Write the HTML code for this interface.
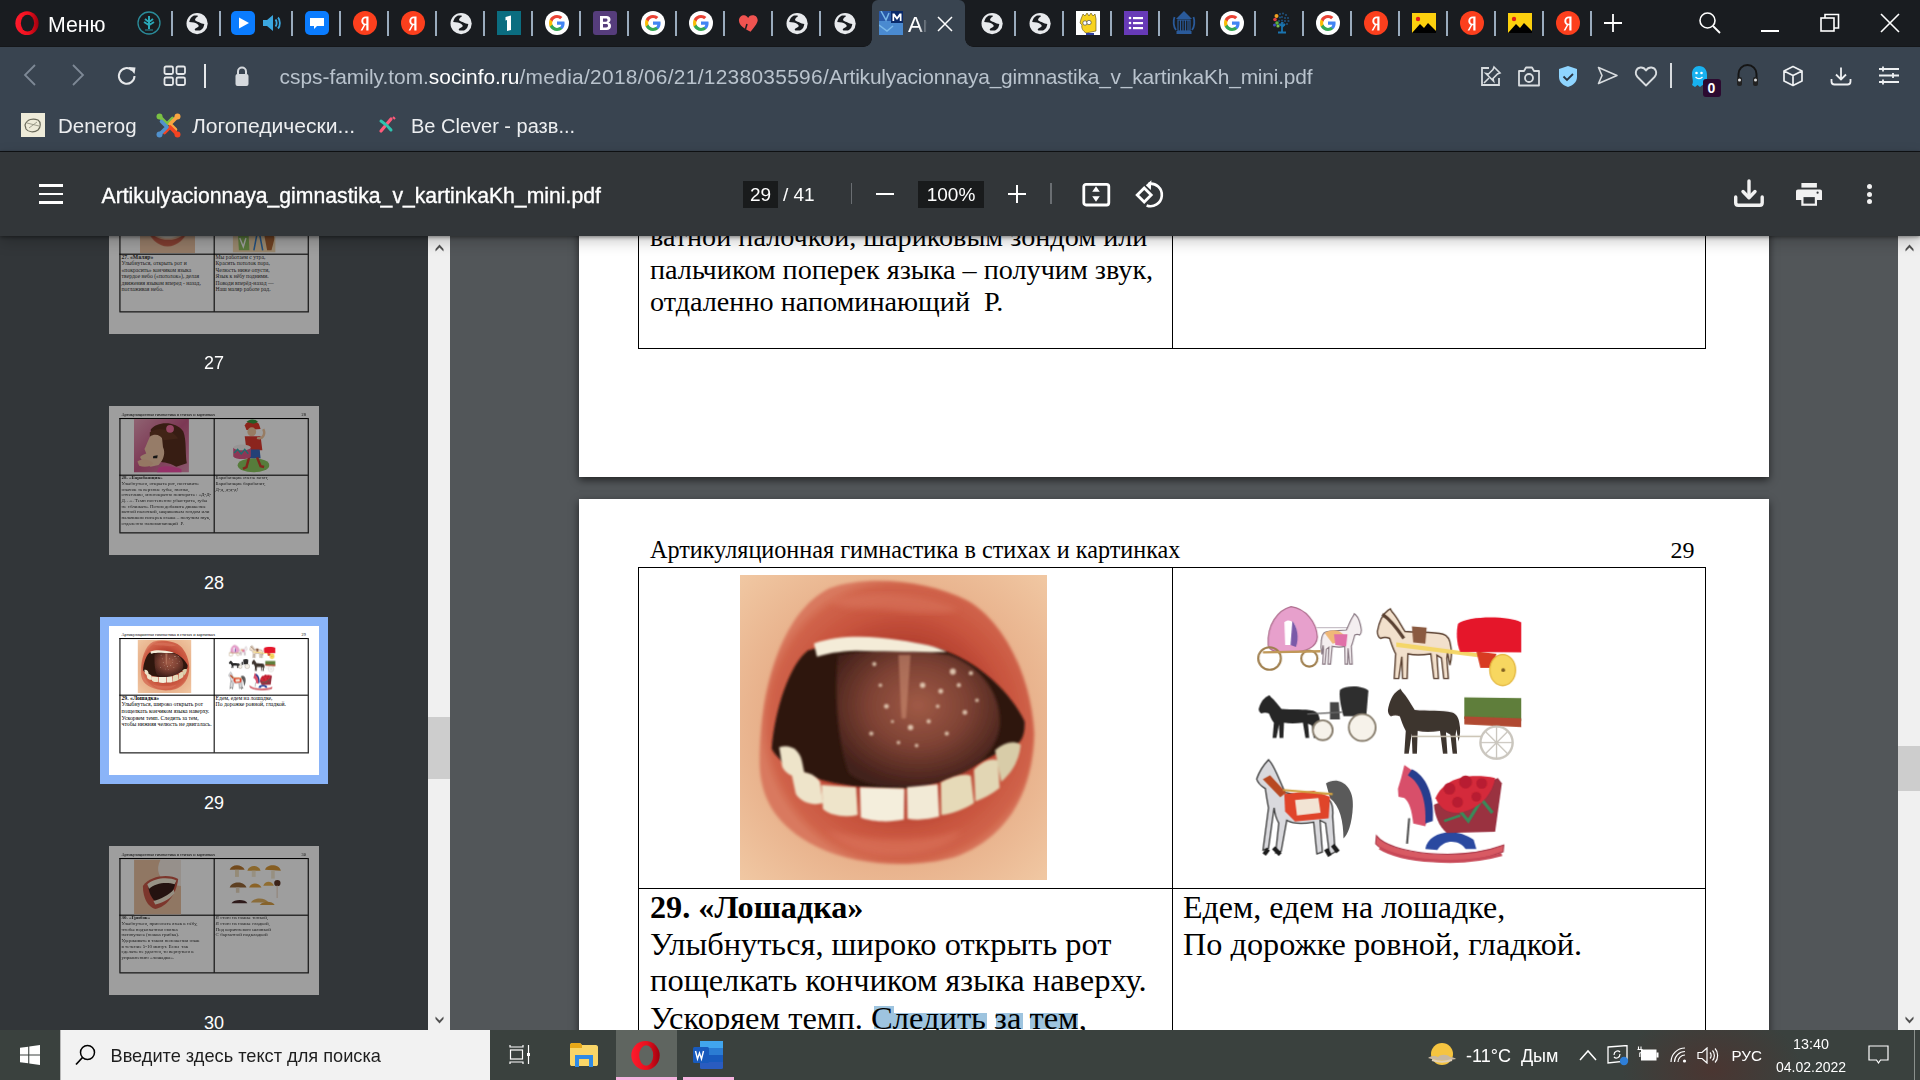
<!DOCTYPE html>
<html><head><meta charset="utf-8">
<style>
*{margin:0;padding:0;box-sizing:border-box}
html,body{width:1920px;height:1080px;overflow:hidden;background:#525659;font-family:"Liberation Sans",sans-serif}
.a{position:absolute}
.ui{position:absolute;font-family:"Liberation Sans",sans-serif;white-space:pre}
#tabs{left:0;top:0;width:1920px;height:47px;background:#191c20;border-bottom:1px solid #15171a}
#addr{left:0;top:47px;width:1920px;height:104px;background:#394450}
#line{left:0;top:151px;width:1920px;height:1px;background:#111316}
#tb{left:0;top:152px;width:1920px;height:84px;background:#323639;box-shadow:0 1px 4px rgba(0,0,0,.45),0 5px 14px rgba(0,0,0,.22);z-index:5}
#side{left:0;top:236px;width:428px;height:794px;background:#323639;overflow:hidden}
#sscroll{left:428px;top:236px;width:22px;height:794px;background:#f0f0f0}
#main{left:450px;top:236px;width:1448px;height:794px;background:#525659;overflow:hidden}
#mscroll{left:1898px;top:236px;width:22px;height:794px;background:#f0f0f0}
#task{left:0;top:1030px;width:1920px;height:50px;background:radial-gradient(ellipse 90px 60px at 1712px 40px,rgba(80,50,45,.75),rgba(80,50,45,0)),#3a413e;z-index:6}
.page{position:absolute;background:#fff;box-shadow:0 3px 8px rgba(0,0,0,.6)}
.s{position:absolute;font-family:"Liberation Serif",serif;color:#000;white-space:pre;line-height:1.107}
.hl{position:absolute;background:#9ec4df}
.ln{position:absolute;background:#000}
</style></head><body>
<div id="tabs" class="a"></div>
<div id="addr" class="a"></div>
<div id="line" class="a"></div>
<div class="a" style="left:0;top:0;width:1920px;height:151px;z-index:7">
<svg class="a" style="left:15.0px;top:11.0px" width="24" height="24" viewBox="0 0 24 24"><defs><linearGradient id="og" x1="0" x2="1" y1="0" y2="0"><stop offset="0" stop-color="#ff1b2d"/><stop offset=".55" stop-color="#f0101e"/><stop offset="1" stop-color="#a0000f"/></linearGradient></defs><ellipse cx="12" cy="12.2" rx="11.6" ry="12" fill="url(#og)"/><ellipse cx="12.5" cy="12.2" rx="6.6" ry="8.4" fill="#191c20"/></svg>
<div class="a ui" style="left:48px;top:12.5px;font-size:21.3px;color:#fff;line-height:24px">Меню</div>
<svg class="a" style="left:137.0px;top:11.0px" width="24" height="24" viewBox="0 0 24 24"><circle cx="12" cy="12" r="11" fill="none" stroke="#2a8c9a" stroke-width="1.3"/><path d="M12 5 L12 18 M8 8 L12 11 L16 8 M7 11 L12 14 L17 11" stroke="#2aa8b8" stroke-width="2"/><path d="M8 19 H16" stroke="#2a8c9a"/></svg>
<div class="a" style="left:171px;top:11px;width:2px;height:25px;background:#9aabbd"></div>
<svg class="a" style="left:185.0px;top:11.0px" width="24" height="24" viewBox="0 0 24 24"><circle cx="12.1" cy="12.6" r="10.6" fill="#e8eaed"/><path d="M13 4.7 C11 4.5 9 4.5 8.4 4.7 C7 5.5 5.8 6.8 5.3 7.9 C4.8 9 4.3 10 4.2 11 C6 11.2 7.5 11.2 8.9 11.5 C10 11.8 11 12 11.5 12.5 C12.5 13.2 13.4 13.9 13.6 14.6 C13.8 15.3 13.5 15.8 13 16.1 C12 16.8 10.5 17.5 9.7 18.2 C9.8 18.9 10 19.3 10.4 19.5 C12 19.6 13.5 19.6 14.9 19.5 C16.3 18.8 17.5 17.8 18.2 16.7 C18.8 15.5 19.2 14.2 19.3 13 C18.4 12.8 17.5 12.6 16.7 12.5 C15.5 12 14.5 11.5 13.6 11 C12.3 10.5 11 10 10.4 9.4 C10 8.8 10 8.3 10.2 7.9 C10.8 7 11.8 6.2 12.5 5.8 Z" fill="#191c20"/></svg>
<div class="a" style="left:219px;top:11px;width:2px;height:25px;background:#9aabbd"></div>
<svg class="a" style="left:231.0px;top:11.0px" width="24" height="24" viewBox="0 0 24 24"><rect width="24" height="24" rx="5" fill="#1a73e8" style="fill:#0a7cff"/><path d="M8 6.5 L18 12 L8 17.5 Z" fill="#fff"/></svg>
<svg class="a" style="left:260.0px;top:11.0px" width="24" height="24" viewBox="0 0 24 24"><path d="M3 9 H7 L13 4 V20 L7 15 H3 Z" fill="#3ba7e0"/><path d="M15.5 8.5 C17 10 17 14 15.5 15.5 M18 6.5 C20.5 9 20.5 15 18 17.5" stroke="#3ba7e0" stroke-width="1.8" fill="none"/></svg>
<div class="a" style="left:291px;top:11px;width:2px;height:25px;background:#9aabbd"></div>
<svg class="a" style="left:305.0px;top:11.0px" width="24" height="24" viewBox="0 0 24 24"><rect width="24" height="24" rx="5" fill="#0a7cff"/><path d="M5 7 H19 V15 H12 L9 18 V15 H5 Z" fill="#fff"/></svg>
<div class="a" style="left:339px;top:11px;width:2px;height:25px;background:#9aabbd"></div>
<svg class="a" style="left:353.0px;top:11.0px" width="24" height="24" viewBox="0 0 24 24"><circle cx="12" cy="12" r="12" fill="#fc3f1d"/><path d="M13.3 19.5 V14.3 H12.2 L9.4 19.5 H7.6 L10.7 13.9 C9.1 13.2 8.3 11.9 8.3 10.1 C8.3 7.3 10.1 5.5 13 5.5 H15.5 V19.5 Z M13.3 7.2 H12.6 C11.1 7.2 10.3 8.2 10.3 10 C10.3 11.8 11.1 12.7 12.6 12.7 H13.3 Z" fill="#fff"/></svg>
<div class="a" style="left:387px;top:11px;width:2px;height:25px;background:#9aabbd"></div>
<svg class="a" style="left:401.0px;top:11.0px" width="24" height="24" viewBox="0 0 24 24"><circle cx="12" cy="12" r="12" fill="#fc3f1d"/><path d="M13.3 19.5 V14.3 H12.2 L9.4 19.5 H7.6 L10.7 13.9 C9.1 13.2 8.3 11.9 8.3 10.1 C8.3 7.3 10.1 5.5 13 5.5 H15.5 V19.5 Z M13.3 7.2 H12.6 C11.1 7.2 10.3 8.2 10.3 10 C10.3 11.8 11.1 12.7 12.6 12.7 H13.3 Z" fill="#fff"/></svg>
<div class="a" style="left:435px;top:11px;width:2px;height:25px;background:#9aabbd"></div>
<svg class="a" style="left:449.0px;top:11.0px" width="24" height="24" viewBox="0 0 24 24"><circle cx="12.1" cy="12.6" r="10.6" fill="#e8eaed"/><path d="M13 4.7 C11 4.5 9 4.5 8.4 4.7 C7 5.5 5.8 6.8 5.3 7.9 C4.8 9 4.3 10 4.2 11 C6 11.2 7.5 11.2 8.9 11.5 C10 11.8 11 12 11.5 12.5 C12.5 13.2 13.4 13.9 13.6 14.6 C13.8 15.3 13.5 15.8 13 16.1 C12 16.8 10.5 17.5 9.7 18.2 C9.8 18.9 10 19.3 10.4 19.5 C12 19.6 13.5 19.6 14.9 19.5 C16.3 18.8 17.5 17.8 18.2 16.7 C18.8 15.5 19.2 14.2 19.3 13 C18.4 12.8 17.5 12.6 16.7 12.5 C15.5 12 14.5 11.5 13.6 11 C12.3 10.5 11 10 10.4 9.4 C10 8.8 10 8.3 10.2 7.9 C10.8 7 11.8 6.2 12.5 5.8 Z" fill="#191c20"/></svg>
<div class="a" style="left:483px;top:11px;width:2px;height:25px;background:#9aabbd"></div>
<svg class="a" style="left:497.0px;top:11.0px" width="24" height="24" viewBox="0 0 24 24"><rect width="24" height="24" fill="#0b6d80"/><path d="M8.5 6 L14 4.5 V19 L10 20 V9 L8.5 9.5 Z" fill="#fff"/></svg>
<div class="a" style="left:531px;top:11px;width:2px;height:25px;background:#9aabbd"></div>
<svg class="a" style="left:545.0px;top:11.0px" width="24" height="24" viewBox="0 0 24 24"><circle cx="12" cy="12" r="12" fill="#fff"/><path d="M19.6 12.2 c0-.6-.1-1.1-.2-1.6 H12 v3.1 h4.3 c-.2 1-.8 1.9-1.6 2.4 v2 h2.6 c1.5-1.4 2.3-3.4 2.3-5.9z" fill="#4285f4"/><path d="M12 20 c2.2 0 4-.7 5.3-1.9 l-2.6-2 c-.7.5-1.6.8-2.7.8 -2.1 0-3.9-1.4-4.5-3.3 H4.8 v2.1 C6.1 18.2 8.8 20 12 20z" fill="#34a853"/><path d="M7.5 13.6 c-.2-.5-.3-1-.3-1.6 s.1-1.1.3-1.6 V8.3 H4.8 C4.3 9.4 4 10.7 4 12 s.3 2.6.8 3.7z" fill="#fbbc05"/><path d="M12 7.1 c1.2 0 2.3.4 3.1 1.2 l2.3-2.3 C16 4.7 14.2 4 12 4 8.8 4 6.1 5.8 4.8 8.3 l2.7 2.1 c.6-1.9 2.4-3.3 4.5-3.3z" fill="#ea4335"/></svg>
<div class="a" style="left:579px;top:11px;width:2px;height:25px;background:#9aabbd"></div>
<svg class="a" style="left:593.0px;top:11.0px" width="24" height="24" viewBox="0 0 24 24"><rect width="24" height="24" rx="3" fill="#563d7c"/><path d="M7 5 H13.5 C16 5 17.5 6.3 17.5 8.5 C17.5 10 16.7 11 15.5 11.5 C17.2 12 18 13.3 18 15 C18 17.5 16.3 19 13.5 19 H7 Z M10 7.5 V10.7 H13 C14 10.7 14.5 10.1 14.5 9.1 C14.5 8.1 14 7.5 13 7.5 Z M10 13 V16.5 H13.3 C14.4 16.5 15 15.9 15 14.8 C15 13.6 14.4 13 13.3 13 Z" fill="#fff"/></svg>
<div class="a" style="left:627px;top:11px;width:2px;height:25px;background:#9aabbd"></div>
<svg class="a" style="left:641.0px;top:11.0px" width="24" height="24" viewBox="0 0 24 24"><circle cx="12" cy="12" r="12" fill="#fff"/><path d="M19.6 12.2 c0-.6-.1-1.1-.2-1.6 H12 v3.1 h4.3 c-.2 1-.8 1.9-1.6 2.4 v2 h2.6 c1.5-1.4 2.3-3.4 2.3-5.9z" fill="#4285f4"/><path d="M12 20 c2.2 0 4-.7 5.3-1.9 l-2.6-2 c-.7.5-1.6.8-2.7.8 -2.1 0-3.9-1.4-4.5-3.3 H4.8 v2.1 C6.1 18.2 8.8 20 12 20z" fill="#34a853"/><path d="M7.5 13.6 c-.2-.5-.3-1-.3-1.6 s.1-1.1.3-1.6 V8.3 H4.8 C4.3 9.4 4 10.7 4 12 s.3 2.6.8 3.7z" fill="#fbbc05"/><path d="M12 7.1 c1.2 0 2.3.4 3.1 1.2 l2.3-2.3 C16 4.7 14.2 4 12 4 8.8 4 6.1 5.8 4.8 8.3 l2.7 2.1 c.6-1.9 2.4-3.3 4.5-3.3z" fill="#ea4335"/></svg>
<div class="a" style="left:675px;top:11px;width:2px;height:25px;background:#9aabbd"></div>
<svg class="a" style="left:689.0px;top:11.0px" width="24" height="24" viewBox="0 0 24 24"><circle cx="12" cy="12" r="12" fill="#fff"/><path d="M19.6 12.2 c0-.6-.1-1.1-.2-1.6 H12 v3.1 h4.3 c-.2 1-.8 1.9-1.6 2.4 v2 h2.6 c1.5-1.4 2.3-3.4 2.3-5.9z" fill="#4285f4"/><path d="M12 20 c2.2 0 4-.7 5.3-1.9 l-2.6-2 c-.7.5-1.6.8-2.7.8 -2.1 0-3.9-1.4-4.5-3.3 H4.8 v2.1 C6.1 18.2 8.8 20 12 20z" fill="#34a853"/><path d="M7.5 13.6 c-.2-.5-.3-1-.3-1.6 s.1-1.1.3-1.6 V8.3 H4.8 C4.3 9.4 4 10.7 4 12 s.3 2.6.8 3.7z" fill="#fbbc05"/><path d="M12 7.1 c1.2 0 2.3.4 3.1 1.2 l2.3-2.3 C16 4.7 14.2 4 12 4 8.8 4 6.1 5.8 4.8 8.3 l2.7 2.1 c.6-1.9 2.4-3.3 4.5-3.3z" fill="#ea4335"/></svg>
<div class="a" style="left:723px;top:11px;width:2px;height:25px;background:#9aabbd"></div>
<svg class="a" style="left:737.0px;top:11.0px" width="24" height="24" viewBox="0 0 24 24"><path d="M12 21 C6 16 2 13 2.5 8 C3 4.5 6 3 8.5 3.5 C10.5 4 11.5 5.5 12 7 C13 5.5 14.5 4.5 17 5 C20 5.5 21.5 8 21 11 C20 14 16 17.5 12 21 Z" fill="#f05350" transform="rotate(-10 12 12)"/><path d="M10 13 L8.5 18" stroke="#1b1e22" stroke-width="1.5"/></svg>
<div class="a" style="left:771px;top:11px;width:2px;height:25px;background:#9aabbd"></div>
<svg class="a" style="left:785.0px;top:11.0px" width="24" height="24" viewBox="0 0 24 24"><circle cx="12.1" cy="12.6" r="10.6" fill="#e8eaed"/><path d="M13 4.7 C11 4.5 9 4.5 8.4 4.7 C7 5.5 5.8 6.8 5.3 7.9 C4.8 9 4.3 10 4.2 11 C6 11.2 7.5 11.2 8.9 11.5 C10 11.8 11 12 11.5 12.5 C12.5 13.2 13.4 13.9 13.6 14.6 C13.8 15.3 13.5 15.8 13 16.1 C12 16.8 10.5 17.5 9.7 18.2 C9.8 18.9 10 19.3 10.4 19.5 C12 19.6 13.5 19.6 14.9 19.5 C16.3 18.8 17.5 17.8 18.2 16.7 C18.8 15.5 19.2 14.2 19.3 13 C18.4 12.8 17.5 12.6 16.7 12.5 C15.5 12 14.5 11.5 13.6 11 C12.3 10.5 11 10 10.4 9.4 C10 8.8 10 8.3 10.2 7.9 C10.8 7 11.8 6.2 12.5 5.8 Z" fill="#191c20"/></svg>
<div class="a" style="left:819px;top:11px;width:2px;height:25px;background:#9aabbd"></div>
<svg class="a" style="left:833.0px;top:11.0px" width="24" height="24" viewBox="0 0 24 24"><circle cx="12.1" cy="12.6" r="10.6" fill="#e8eaed"/><path d="M13 4.7 C11 4.5 9 4.5 8.4 4.7 C7 5.5 5.8 6.8 5.3 7.9 C4.8 9 4.3 10 4.2 11 C6 11.2 7.5 11.2 8.9 11.5 C10 11.8 11 12 11.5 12.5 C12.5 13.2 13.4 13.9 13.6 14.6 C13.8 15.3 13.5 15.8 13 16.1 C12 16.8 10.5 17.5 9.7 18.2 C9.8 18.9 10 19.3 10.4 19.5 C12 19.6 13.5 19.6 14.9 19.5 C16.3 18.8 17.5 17.8 18.2 16.7 C18.8 15.5 19.2 14.2 19.3 13 C18.4 12.8 17.5 12.6 16.7 12.5 C15.5 12 14.5 11.5 13.6 11 C12.3 10.5 11 10 10.4 9.4 C10 8.8 10 8.3 10.2 7.9 C10.8 7 11.8 6.2 12.5 5.8 Z" fill="#191c20"/></svg>
<div class="a" style="left:872px;top:0;width:93px;height:47px;background:#394450;border-radius:6px 6px 0 0"></div>
<div class="a" style="left:864px;top:39px;width:8px;height:8px;background:radial-gradient(circle at 0 0,#191c20 7.5px,#394450 8px)"></div>
<div class="a" style="left:965px;top:39px;width:8px;height:8px;background:radial-gradient(circle at 100% 0,#191c20 7.5px,#394450 8px)"></div>
<svg class="a" style="left:879px;top:11px" width="24" height="24" viewBox="0 0 24 24"><rect width="24" height="24" fill="#2a5aa8"/><rect x="0" y="10" width="24" height="14" fill="#4a8ad0"/><rect x="12" y="0" width="12" height="12" fill="#0a2a6a"/><path d="M13.5 10 V2.5 H15.5 L18 6 L20.5 2.5 H22.5 V10 H20.8 V5.5 L18 9 L15.2 5.5 V10 Z" fill="#fff"/><path d="M2 0 L7 9 L10 2 M0 14 L8 20 L14 15" stroke="#7ab8e8" stroke-width="1.5" fill="none"/></svg>
<div class="a ui" style="left:908px;top:13px;width:19px;overflow:hidden;font-size:22px;color:#fff;line-height:24px;-webkit-mask-image:linear-gradient(90deg,#000 60%,transparent)">Ar</div>
<svg class="a" style="left:937px;top:16px" width="16" height="16" viewBox="0 0 16 16"><path d="M1 1 L15 15 M15 1 L1 15" stroke="#fff" stroke-width="1.5"/></svg>
<svg class="a" style="left:980.0px;top:11.0px" width="24" height="24" viewBox="0 0 24 24"><circle cx="12.1" cy="12.6" r="10.6" fill="#e8eaed"/><path d="M13 4.7 C11 4.5 9 4.5 8.4 4.7 C7 5.5 5.8 6.8 5.3 7.9 C4.8 9 4.3 10 4.2 11 C6 11.2 7.5 11.2 8.9 11.5 C10 11.8 11 12 11.5 12.5 C12.5 13.2 13.4 13.9 13.6 14.6 C13.8 15.3 13.5 15.8 13 16.1 C12 16.8 10.5 17.5 9.7 18.2 C9.8 18.9 10 19.3 10.4 19.5 C12 19.6 13.5 19.6 14.9 19.5 C16.3 18.8 17.5 17.8 18.2 16.7 C18.8 15.5 19.2 14.2 19.3 13 C18.4 12.8 17.5 12.6 16.7 12.5 C15.5 12 14.5 11.5 13.6 11 C12.3 10.5 11 10 10.4 9.4 C10 8.8 10 8.3 10.2 7.9 C10.8 7 11.8 6.2 12.5 5.8 Z" fill="#191c20"/></svg>
<div class="a" style="left:1014px;top:11px;width:2px;height:25px;background:#9aabbd"></div>
<svg class="a" style="left:1028.0px;top:11.0px" width="24" height="24" viewBox="0 0 24 24"><circle cx="12.1" cy="12.6" r="10.6" fill="#e8eaed"/><path d="M13 4.7 C11 4.5 9 4.5 8.4 4.7 C7 5.5 5.8 6.8 5.3 7.9 C4.8 9 4.3 10 4.2 11 C6 11.2 7.5 11.2 8.9 11.5 C10 11.8 11 12 11.5 12.5 C12.5 13.2 13.4 13.9 13.6 14.6 C13.8 15.3 13.5 15.8 13 16.1 C12 16.8 10.5 17.5 9.7 18.2 C9.8 18.9 10 19.3 10.4 19.5 C12 19.6 13.5 19.6 14.9 19.5 C16.3 18.8 17.5 17.8 18.2 16.7 C18.8 15.5 19.2 14.2 19.3 13 C18.4 12.8 17.5 12.6 16.7 12.5 C15.5 12 14.5 11.5 13.6 11 C12.3 10.5 11 10 10.4 9.4 C10 8.8 10 8.3 10.2 7.9 C10.8 7 11.8 6.2 12.5 5.8 Z" fill="#191c20"/></svg>
<div class="a" style="left:1062px;top:11px;width:2px;height:25px;background:#9aabbd"></div>
<svg class="a" style="left:1076.0px;top:11.0px" width="24" height="24" viewBox="0 0 24 24"><rect width="24" height="24" fill="#fff"/><path d="M5 8 L7 3 L9 5 L11 2 L13 5 L15 2 L17 5 L19 3 L20 8 V20 L10 22 C7 20 5 17 6 14 L4 12 Z" fill="#f8d320" stroke="#5a4a10" stroke-width=".6"/><circle cx="9" cy="12" r="2.2" fill="#fff" stroke="#333" stroke-width=".6"/><circle cx="13" cy="11.5" r="2.2" fill="#fff" stroke="#333" stroke-width=".6"/><path d="M10 22 L18 22 L18 24 L10 24Z" fill="#3040a0"/></svg>
<div class="a" style="left:1110px;top:11px;width:2px;height:25px;background:#9aabbd"></div>
<svg class="a" style="left:1124.0px;top:11.0px" width="24" height="24" viewBox="0 0 24 24"><rect width="24" height="24" fill="#673ab7"/><circle cx="6" cy="7" r="1.3" fill="#fff"/><circle cx="6" cy="12" r="1.3" fill="#fff"/><circle cx="6" cy="17" r="1.3" fill="#fff"/><rect x="9" y="6" width="10" height="2.2" fill="#fff"/><rect x="9" y="11" width="10" height="2.2" fill="#fff"/><rect x="9" y="16" width="10" height="2.2" fill="#fff"/></svg>
<div class="a" style="left:1158px;top:11px;width:2px;height:25px;background:#9aabbd"></div>
<svg class="a" style="left:1172.0px;top:11.0px" width="24" height="24" viewBox="0 0 24 24"><path d="M12 0 L20 8 H4 Z" fill="#2a5a9a"/><rect x="6" y="9" width="12" height="11" fill="none" stroke="#2a5a9a" stroke-width="1.2"/><path d="M8.5 9 V20 M11 9 V20 M13.5 9 V20 M16 9 V20" stroke="#2a5a9a" stroke-width="1.2"/><rect x="4.5" y="20" width="15" height="3" fill="#2a5a9a"/><path d="M2.5 6 C1 10 1.5 16 4 19 M21.5 6 C23 10 22.5 16 20 19" stroke="#2a5a9a" stroke-width="1.8" fill="none"/></svg>
<div class="a" style="left:1206px;top:11px;width:2px;height:25px;background:#9aabbd"></div>
<svg class="a" style="left:1220.0px;top:11.0px" width="24" height="24" viewBox="0 0 24 24"><circle cx="12" cy="12" r="12" fill="#fff"/><path d="M19.6 12.2 c0-.6-.1-1.1-.2-1.6 H12 v3.1 h4.3 c-.2 1-.8 1.9-1.6 2.4 v2 h2.6 c1.5-1.4 2.3-3.4 2.3-5.9z" fill="#4285f4"/><path d="M12 20 c2.2 0 4-.7 5.3-1.9 l-2.6-2 c-.7.5-1.6.8-2.7.8 -2.1 0-3.9-1.4-4.5-3.3 H4.8 v2.1 C6.1 18.2 8.8 20 12 20z" fill="#34a853"/><path d="M7.5 13.6 c-.2-.5-.3-1-.3-1.6 s.1-1.1.3-1.6 V8.3 H4.8 C4.3 9.4 4 10.7 4 12 s.3 2.6.8 3.7z" fill="#fbbc05"/><path d="M12 7.1 c1.2 0 2.3.4 3.1 1.2 l2.3-2.3 C16 4.7 14.2 4 12 4 8.8 4 6.1 5.8 4.8 8.3 l2.7 2.1 c.6-1.9 2.4-3.3 4.5-3.3z" fill="#ea4335"/></svg>
<div class="a" style="left:1254px;top:11px;width:2px;height:25px;background:#9aabbd"></div>
<svg class="a" style="left:1268.0px;top:11.0px" width="24" height="24" viewBox="0 0 24 24"><circle cx="12" cy="3" r="1.1" fill="#1f4e78"/><circle cx="15" cy="2.5" r="1.1" fill="#1f4e78"/><circle cx="18" cy="4" r="1.1" fill="#1f4e78"/><circle cx="20" cy="7" r="1.1" fill="#1f4e78"/><circle cx="20.5" cy="10" r="1.1" fill="#1f4e78"/><circle cx="19" cy="13" r="1.1" fill="#1f4e78"/><circle cx="16" cy="14" r="1.1" fill="#1f4e78"/><circle cx="13" cy="13" r="1.1" fill="#1f4e78"/><circle cx="11" cy="10" r="1.1" fill="#1f4e78"/><circle cx="14" cy="6" r="1.1" fill="#1f4e78"/><circle cx="17" cy="7" r="1.1" fill="#1f4e78"/><circle cx="17" cy="10" r="1.1" fill="#1f4e78"/><circle cx="14" cy="9.5" r="1.1" fill="#1f4e78"/><circle cx="12" cy="6.5" r="1.1" fill="#1f4e78"/><circle cx="15" cy="12" r="1.1" fill="#1f4e78"/><path d="M14 11 V21 M10 21.5 H18 M14 15 L11 13 M14 16 L17 13" stroke="#1a74b0" stroke-width="1.8" fill="none"/><circle cx="8.5" cy="5" r="2" fill="#f0a020"/><circle cx="7" cy="8.5" r="1.8" fill="#e04040"/><circle cx="9" cy="12" r="1.8" fill="#5ab040"/><circle cx="6.5" cy="14" r="1.5" fill="#4050c0"/><circle cx="10" cy="15" r="1.6" fill="#7ac050"/></svg>
<div class="a" style="left:1302px;top:11px;width:2px;height:25px;background:#9aabbd"></div>
<svg class="a" style="left:1316.0px;top:11.0px" width="24" height="24" viewBox="0 0 24 24"><circle cx="12" cy="12" r="12" fill="#fff"/><path d="M19.6 12.2 c0-.6-.1-1.1-.2-1.6 H12 v3.1 h4.3 c-.2 1-.8 1.9-1.6 2.4 v2 h2.6 c1.5-1.4 2.3-3.4 2.3-5.9z" fill="#4285f4"/><path d="M12 20 c2.2 0 4-.7 5.3-1.9 l-2.6-2 c-.7.5-1.6.8-2.7.8 -2.1 0-3.9-1.4-4.5-3.3 H4.8 v2.1 C6.1 18.2 8.8 20 12 20z" fill="#34a853"/><path d="M7.5 13.6 c-.2-.5-.3-1-.3-1.6 s.1-1.1.3-1.6 V8.3 H4.8 C4.3 9.4 4 10.7 4 12 s.3 2.6.8 3.7z" fill="#fbbc05"/><path d="M12 7.1 c1.2 0 2.3.4 3.1 1.2 l2.3-2.3 C16 4.7 14.2 4 12 4 8.8 4 6.1 5.8 4.8 8.3 l2.7 2.1 c.6-1.9 2.4-3.3 4.5-3.3z" fill="#ea4335"/></svg>
<div class="a" style="left:1350px;top:11px;width:2px;height:25px;background:#9aabbd"></div>
<svg class="a" style="left:1364.0px;top:11.0px" width="24" height="24" viewBox="0 0 24 24"><circle cx="12" cy="12" r="12" fill="#fc3f1d"/><path d="M13.3 19.5 V14.3 H12.2 L9.4 19.5 H7.6 L10.7 13.9 C9.1 13.2 8.3 11.9 8.3 10.1 C8.3 7.3 10.1 5.5 13 5.5 H15.5 V19.5 Z M13.3 7.2 H12.6 C11.1 7.2 10.3 8.2 10.3 10 C10.3 11.8 11.1 12.7 12.6 12.7 H13.3 Z" fill="#fff"/></svg>
<div class="a" style="left:1398px;top:11px;width:2px;height:25px;background:#9aabbd"></div>
<svg class="a" style="left:1412.0px;top:11.0px" width="24" height="24" viewBox="0 0 24 24"><rect x="0" y="2" width="24" height="20" fill="#fcd00e"/><path d="M0 22 L8 13 L12 17 L16 12 L24 20 V22 Z" fill="#000"/><circle cx="6" cy="8" r="2.2" fill="#e0201a"/></svg>
<div class="a" style="left:1446px;top:11px;width:2px;height:25px;background:#9aabbd"></div>
<svg class="a" style="left:1460.0px;top:11.0px" width="24" height="24" viewBox="0 0 24 24"><circle cx="12" cy="12" r="12" fill="#fc3f1d"/><path d="M13.3 19.5 V14.3 H12.2 L9.4 19.5 H7.6 L10.7 13.9 C9.1 13.2 8.3 11.9 8.3 10.1 C8.3 7.3 10.1 5.5 13 5.5 H15.5 V19.5 Z M13.3 7.2 H12.6 C11.1 7.2 10.3 8.2 10.3 10 C10.3 11.8 11.1 12.7 12.6 12.7 H13.3 Z" fill="#fff"/></svg>
<div class="a" style="left:1494px;top:11px;width:2px;height:25px;background:#9aabbd"></div>
<svg class="a" style="left:1508.0px;top:11.0px" width="24" height="24" viewBox="0 0 24 24"><rect x="0" y="2" width="24" height="20" fill="#fcd00e"/><path d="M0 22 L8 13 L12 17 L16 12 L24 20 V22 Z" fill="#000"/><circle cx="6" cy="8" r="2.2" fill="#e0201a"/></svg>
<div class="a" style="left:1542px;top:11px;width:2px;height:25px;background:#9aabbd"></div>
<svg class="a" style="left:1556.0px;top:11.0px" width="24" height="24" viewBox="0 0 24 24"><circle cx="12" cy="12" r="12" fill="#fc3f1d"/><path d="M13.3 19.5 V14.3 H12.2 L9.4 19.5 H7.6 L10.7 13.9 C9.1 13.2 8.3 11.9 8.3 10.1 C8.3 7.3 10.1 5.5 13 5.5 H15.5 V19.5 Z M13.3 7.2 H12.6 C11.1 7.2 10.3 8.2 10.3 10 C10.3 11.8 11.1 12.7 12.6 12.7 H13.3 Z" fill="#fff"/></svg>
<div class="a" style="left:1590px;top:11px;width:2px;height:25px;background:#9aabbd"></div>
<svg class="a" style="left:1603px;top:13px" width="20" height="20" viewBox="0 0 20 20"><path d="M10 1 V19 M1 10 H19" stroke="#fff" stroke-width="1.8"/></svg>
<svg class="a" style="left:1698px;top:11px" width="24" height="24" viewBox="0 0 24 24"><circle cx="9.5" cy="9.5" r="7.5" fill="none" stroke="#fff" stroke-width="1.6"/><path d="M15 15 L22 22" stroke="#fff" stroke-width="1.8"/></svg>
<div class="a" style="left:1761px;top:30px;width:18px;height:2px;background:#fff"></div>
<svg class="a" style="left:1820px;top:13px" width="20" height="20" viewBox="0 0 20 20"><rect x="1" y="5" width="13" height="13" fill="none" stroke="#fff" stroke-width="1.6"/><path d="M5 5 V1.5 H18.5 V15 H14" fill="none" stroke="#fff" stroke-width="1.6"/></svg>
<svg class="a" style="left:1880px;top:13px" width="20" height="20" viewBox="0 0 20 20"><path d="M1 1 L19 19 M19 1 L1 19" stroke="#fff" stroke-width="1.6"/></svg>
<svg class="a" style="left:22px;top:63px" width="16" height="24" viewBox="0 0 16 24"><path d="M13 2 L3 12 L13 22" stroke="#7e8996" stroke-width="1.8" fill="none"/></svg>
<svg class="a" style="left:70px;top:63px" width="16" height="24" viewBox="0 0 16 24"><path d="M3 2 L13 12 L3 22" stroke="#7e8996" stroke-width="1.8" fill="none"/></svg>
<svg class="a" style="left:115px;top:64px" width="24" height="24" viewBox="0 0 24 24"><path d="M19.5 12 A7.8 7.8 0 1 1 17 6.2" stroke="#e6e8ea" stroke-width="2" fill="none"/><path d="M13.5 3 L20.5 3.5 L19.5 10 Z" fill="#e6e8ea"/></svg>
<svg class="a" style="left:163px;top:65px" width="24" height="22" viewBox="0 0 24 22"><rect x="1.5" y="1.5" width="8.5" height="7.5" rx="1.5" fill="none" stroke="#e6e8ea" stroke-width="1.8"/><rect x="13.5" y="1.5" width="8.5" height="7.5" rx="1.5" fill="none" stroke="#e6e8ea" stroke-width="1.8"/><rect x="1.5" y="12.5" width="8.5" height="7.5" rx="1.5" fill="none" stroke="#e6e8ea" stroke-width="1.8"/><rect x="13.5" y="12.5" width="8.5" height="7.5" rx="1.5" fill="none" stroke="#e6e8ea" stroke-width="1.8"/></svg>
<div class="a" style="left:204px;top:64px;width:2px;height:24px;background:#e6e8ea"></div>
<svg class="a" style="left:234px;top:65px" width="16" height="22" viewBox="0 0 16 22"><path d="M4 9 V6.5 A4 4 0 0 1 12 6.5 V9" stroke="#d5d9dd" stroke-width="2" fill="none"/><rect x="1.5" y="9" width="13" height="12" rx="2" fill="#d5d9dd"/></svg>
<div class="a ui" style="left:279.5px;top:63.5px;font-size:20.9px;line-height:26px;color:#b9c3cd;white-space:pre">csps-family.tom.<span style="color:#fff">socinfo.ru</span></div>
<div class="a ui" style="left:519.5px;top:63.5px;font-size:20.9px;line-height:26px;color:#b9c3cd;white-space:pre;letter-spacing:.3px">/media/2018/06/21/1238035596/</div>
<div class="a ui" style="left:829px;top:63.5px;font-size:20.9px;line-height:26px;color:#b9c3cd;white-space:pre;letter-spacing:-.18px">Artikulyacionnaya_gimnastika_v_kartinkaKh_mini.pdf</div>
<svg class="a" style="left:1480px;top:65px" width="22" height="22" viewBox="0 0 22 22"><path d="M9 3 H2 V20 H19 V13" stroke="#d8dcdf" stroke-width="1.8" fill="none"/><path d="M14 2 L20 8 L17.5 9 L13 13.5 L13.5 16 L6 8.5 L8.5 9 L13 4.5 Z" stroke="#d8dcdf" stroke-width="1.6" fill="none"/><path d="M4 18 L9 13" stroke="#d8dcdf" stroke-width="1.6"/></svg>
<svg class="a" style="left:1517px;top:65px" width="24" height="22" viewBox="0 0 24 22"><path d="M2 6 H7 L9 2.5 H15 L17 6 H22 V20.5 H2 Z" stroke="#d8dcdf" stroke-width="1.8" fill="none" stroke-linejoin="round"/><circle cx="12" cy="13" r="4" stroke="#d8dcdf" stroke-width="1.8" fill="none"/></svg>
<svg class="a" style="left:1558px;top:65px" width="20" height="23" viewBox="0 0 20 23"><path d="M10 1 L19 4 V12 C19 17 15 20.5 10 22 C5 20.5 1 17 1 12 V4 Z" fill="#8fd5ff"/><path d="M5.5 11.5 L9 15 L15 9" stroke="#2b3642" stroke-width="1.8" fill="none"/></svg>
<svg class="a" style="left:1597px;top:66px" width="22" height="19" viewBox="0 0 22 19"><path d="M1.5 1.5 L20 9.5 L1.5 17.5 L5 9.5 Z" stroke="#d8dcdf" stroke-width="1.6" fill="none" stroke-linejoin="round"/></svg>
<svg class="a" style="left:1634px;top:65px" width="24" height="22" viewBox="0 0 24 22"><path d="M12 20.5 L3.5 12 C0.5 9 1.5 3 6.5 2.5 C9 2.3 11 3.8 12 5.5 C13 3.8 15 2.3 17.5 2.5 C22.5 3 23.5 9 20.5 12 Z" stroke="#d8dcdf" stroke-width="1.8" fill="none" stroke-linejoin="round"/></svg>
<div class="a" style="left:1670px;top:63px;width:1.5px;height:25px;background:#d8dcdf"></div>
<svg class="a" style="left:1689px;top:65px" width="20" height="23" viewBox="0 0 20 23"><path d="M10 1 C15.5 1 18 5 18 10 V19 L16 22 L13.5 20 L11 22 L8.5 20 L6 22 L3 20 C5 17 3 13 3 9 C3 4 6 1 10 1 Z" fill="#18b2f0"/><circle cx="7.5" cy="8" r="1.3" fill="#fff"/><circle cx="12.5" cy="8" r="1.3" fill="#fff"/><path d="M6.5 12 C8.5 14 11.5 14 13.5 12" stroke="#fff" stroke-width="1.3" fill="none"/></svg>
<div class="a" style="left:1702.5px;top:78.5px;width:18px;height:18px;background:#2c0a30;border-radius:3px;color:#fff;font-weight:bold;font-size:14px;line-height:18px;text-align:center">0</div>
<svg class="a" style="left:1735px;top:63px" width="25" height="24" viewBox="0 0 25 24"><path d="M3.5 16 V11 A9 9 0 0 1 21.5 11 V16" stroke="#151515" stroke-width="2" fill="none"/><rect x="2" y="14" width="5" height="9" rx="2" fill="#222"/><rect x="18" y="14" width="5" height="9" rx="2" fill="#222"/><circle cx="4.5" cy="17" r="1.5" fill="#ddd"/><circle cx="20.5" cy="17" r="1.5" fill="#ddd"/></svg>
<svg class="a" style="left:1782px;top:65px" width="22" height="22" viewBox="0 0 22 22"><path d="M11 1.5 L20 6 V16 L11 20.5 L2 16 V6 Z M2 6 L11 10.5 L20 6 M11 10.5 V20.5" stroke="#eef0f2" stroke-width="1.7" fill="none" stroke-linejoin="round"/></svg>
<svg class="a" style="left:1830px;top:66px" width="22" height="20" viewBox="0 0 22 20"><path d="M11 1.5 V13 M6 8.5 L11 13.5 L16 8.5" stroke="#eef0f2" stroke-width="1.8" fill="none"/><path d="M1.5 13 V15.5 C1.5 17.5 2.5 18.5 4.5 18.5 H17.5 C19.5 18.5 20.5 17.5 20.5 15.5 V13" stroke="#eef0f2" stroke-width="1.8" fill="none"/></svg>
<svg class="a" style="left:1878px;top:66px" width="22" height="20" viewBox="0 0 22 20"><path d="M1 3 H21 M1 9.5 H21 M1 16 H21" stroke="#eef0f2" stroke-width="1.8"/><path d="M5 0.5 V5.5 M15 7 V12 M5 13.5 V18.5" stroke="#eef0f2" stroke-width="1.8"/></svg>
<svg class="a" style="left:21px;top:112.5px" width="24" height="24" viewBox="0 0 24 24"><rect width="24" height="24" fill="#eeebd9"/><path d="M4 12 C6 6 12 5 17 7 C20 9 20 14 17 17 C13 20 7 19 5 16 Z" fill="none" stroke="#6a6a5a" stroke-width="1.2"/><path d="M6 10 L18 13 M8 15 L16 9" stroke="#8a8a7a" stroke-width=".8"/></svg>
<div class="a ui" style="left:58px;top:114px;font-size:20.5px;line-height:24px;color:#eceef0;white-space:pre">Denerog</div>
<svg class="a" style="left:155.5px;top:112.5px" width="25" height="25" viewBox="0 0 25 25"><g stroke-width="3.6" fill="none" stroke-linecap="round" stroke-linejoin="round"><path d="M4 4 L11 11 L16.5 5.5" stroke="#7ac143"/><path d="M21 4 L14 11 L19.5 16.5" stroke="#f9a541"/><path d="M21 21 L14 14 L8.5 19.5" stroke="#f44321"/><path d="M4 21 L11 14 L5.5 8.5" stroke="#5091cd"/></g><circle cx="3.5" cy="3.5" r="3" fill="#7ac143"/><circle cx="21.5" cy="3.5" r="3" fill="#f9a541"/><circle cx="21.5" cy="21.5" r="3" fill="#f44321"/><circle cx="3.5" cy="21.5" r="3" fill="#5091cd"/></svg>
<div class="a ui" style="left:192px;top:114px;font-size:21.1px;line-height:24px;color:#eceef0;white-space:pre">Логопедически...</div>
<svg class="a" style="left:378px;top:116px" width="18" height="18" viewBox="0 0 18 18"><path d="M3 15 L13 3" stroke="#ff5a7a" stroke-width="3.2" stroke-linecap="round"/><path d="M3 5 C6 7 10 10 13 14" stroke="#2ec4b0" stroke-width="3" fill="none" stroke-linecap="round"/><path d="M15 1 L17 3" stroke="#ff5a7a" stroke-width="2"/></svg>
<div class="a ui" style="left:411px;top:114px;font-size:20px;line-height:24px;color:#eceef0;white-space:pre">Be Clever - разв...</div>
</div>
<div id="tb" class="a">
<div class="a" style="left:0;top:-152px;width:1920px;height:236px">
<div class="a" style="left:39px;top:184px;width:24px;height:2.5px;background:#fff"></div><div class="a" style="left:39px;top:192.5px;width:24px;height:2.5px;background:#fff"></div><div class="a" style="left:39px;top:201px;width:24px;height:2.5px;background:#fff"></div>
<div class="a ui" style="left:101.5px;top:183px;font-size:21.2px;line-height:26px;color:#fff;white-space:pre;-webkit-text-stroke:.35px #fff">Artikulyacionnaya_gimnastika_v_kartinkaKh_mini.pdf</div>
<div class="a" style="left:743px;top:181px;width:35px;height:27px;background:#191b1c"></div>
<div class="a ui" style="left:743px;top:181px;width:35px;font-size:19px;line-height:27px;color:#fff;text-align:center">29</div>
<div class="a ui" style="left:783px;top:181px;font-size:19px;line-height:27px;color:#fff;white-space:pre">/ 41</div>
<div class="a" style="left:850.5px;top:183px;width:1.5px;height:21px;background:#6a6e72"></div>
<div class="a" style="left:876px;top:193px;width:18px;height:2px;background:#fff"></div>
<div class="a" style="left:918px;top:181px;width:66px;height:27px;background:#191b1c"></div>
<div class="a ui" style="left:918px;top:181px;width:66px;font-size:19px;line-height:27px;color:#fff;text-align:center">100%</div>
<div class="a" style="left:1008px;top:193px;width:18px;height:2px;background:#fff"></div><div class="a" style="left:1016px;top:185px;width:2px;height:18px;background:#fff"></div>
<div class="a" style="left:1050px;top:183px;width:1.5px;height:21px;background:#6a6e72"></div>
<svg class="a" style="left:1075px;top:175px" width="95" height="37" viewBox="0 0 95 37"><rect x="8.8" y="9.4" width="25" height="20.6" rx="2.2" stroke="#fff" stroke-width="2.8" fill="none"/><path d="M17.2 16.8 L21 11.3 L24.8 16.8 Z M17.2 21.2 L21 26.8 L24.8 21.2 Z" fill="#fff"/><path d="M69.2 12.9 L76.2 19.9 L69.2 26.9 L62.2 19.9 Z" stroke="#fff" stroke-width="2.8" fill="none" stroke-linejoin="miter"/><path d="M73.5 8.8 A11.3 11.3 0 1 1 71.6 30.5" stroke="#fff" stroke-width="2.6" fill="none"/><path d="M70.8 10.2 L76.4 5.2 L75.8 15 Z" fill="#fff"/></svg>
<svg class="a" style="left:1730px;top:176px" width="100" height="36" viewBox="0 0 100 36"><path d="M19 5 V20" stroke="#f1f1f1" stroke-width="3.4" stroke-linecap="round"/><path d="M13 15.5 L19 21.7 L25 15.5" fill="none" stroke="#f1f1f1" stroke-width="3.4" stroke-linecap="round" stroke-linejoin="round"/><path d="M5.7 21 V26.8 C5.7 28.8 6.7 29.3 8.2 29.3 H29.8 C31.3 29.3 32.2 28.8 32.2 26.8 V21" stroke="#f1f1f1" stroke-width="3.4" fill="none" stroke-linecap="round"/><rect x="71.4" y="7" width="15.5" height="4.6" fill="#f1f1f1"/><path d="M68 13.5 H90 C91.3 13.5 92 14.2 92 15.5 V24 H66 V15.5 C66 14.2 66.7 13.5 68 13.5 Z" fill="#f1f1f1"/><rect x="72.4" y="20" width="13.5" height="8.7" fill="#323639" stroke="#f1f1f1" stroke-width="2.2"/><circle cx="87.6" cy="16.7" r="1.1" fill="#323639"/></svg>
<div class="a" style="left:1866.5px;top:184px;width:5px;height:5px;border-radius:50%;background:#f1f1f1"></div><div class="a" style="left:1866.5px;top:191.5px;width:5px;height:5px;border-radius:50%;background:#f1f1f1"></div><div class="a" style="left:1866.5px;top:199px;width:5px;height:5px;border-radius:50%;background:#f1f1f1"></div>
</div>
</div>
<div id="side" class="a">
<div class="a" style="left:0;top:-236px;width:428px;height:1080px">
<div class="a" style="left:109px;top:185px;width:210px;height:149px;overflow:hidden;background:#fff"><div class="a" style="left:0;top:0;width:1190px;height:844px;transform:scale(0.17647058823529413);transform-origin:0 0"><div class="a" style="left:0;top:0;width:1190px;height:844px;background:#fff"></div>
<div class="ln" style="left:59px;top:68px;width:1068px;height:6px"></div>
<div class="ln" style="left:59px;top:389px;width:1068px;height:6px"></div>
<div class="ln" style="left:59px;top:716px;width:1074px;height:6px"></div>
<div class="ln" style="left:59px;top:68px;width:6px;height:649px"></div>
<div class="ln" style="left:593px;top:68px;width:6px;height:649px"></div>
<div class="ln" style="left:1126px;top:68px;width:6px;height:649px"></div>
<svg class="a" style="left:177px;top:-250px" width="310" height="633" viewBox="0 0 310 633"><rect width="310" height="633" fill="#ecc4a4"/><path d="M30 470 C70 640 240 640 285 470 C250 590 70 590 30 470 Z" fill="#cc624c"/><path d="M45 480 C90 575 225 575 270 480 C230 545 90 545 45 480 Z" fill="#f2ebe0"/><path d="M40 440 C100 470 210 470 275 440 L270 480 C210 500 100 500 45 480 Z" fill="#b04838"/></svg>
<svg class="a" style="left:701px;top:0" width="243" height="383" viewBox="0 0 243 383"><rect x="0" y="230" width="243" height="153" fill="#f0c890" opacity=".7"/><path d="M30 280 L90 280 L95 370 L35 370 Z" fill="#90c060"/><path d="M40 300 L60 350 L75 300" stroke="#fff" stroke-width="8" fill="none"/><path d="M100 0 L170 370 M190 0 L120 370 M115 90 L175 90 M125 170 L170 170 M135 250 L165 250" stroke="#3a80c8" stroke-width="9"/><path d="M180 290 C200 260 240 270 235 310 L220 370 L195 370 Z" fill="#b06838"/><path d="M60 200 L160 200" stroke="#d84040" stroke-width="10"/></svg>
<div class="s" style="left:71px;top:389.0px;font-size:32px;color:#333;font-weight:bold">27. «Маляр»</div>
<div class="s" style="left:71px;top:425.9px;font-size:32px;color:#333">Улыбнуться, открыть рот и</div>
<div class="s" style="left:71px;top:462.8px;font-size:32px;color:#333">«покрасить» кончиком языка</div>
<div class="s" style="left:71px;top:499.7px;font-size:32px;color:#333">твердое небо («потолок»), делая</div>
<div class="s" style="left:71px;top:536.6px;font-size:32px;color:#333">движения языком вперед - назад,</div>
<div class="s" style="left:71px;top:573.5px;font-size:32px;color:#333">поглаживая небо.</div>
<div class="s" style="left:604px;top:389.0px;font-size:32px;color:#333">Мы работаем с утра,</div>
<div class="s" style="left:604px;top:425.9px;font-size:32px;color:#333">Красить потолок пора,</div>
<div class="s" style="left:604px;top:462.8px;font-size:32px;color:#333">Челюсть ниже опусти,</div>
<div class="s" style="left:604px;top:499.7px;font-size:32px;color:#333">Язык к нёбу подними.</div>
<div class="s" style="left:604px;top:536.6px;font-size:32px;color:#333">Поводи вперёд-назад —</div>
<div class="s" style="left:604px;top:573.5px;font-size:32px;color:#333">Наш маляр работе рад.</div></div><div class="a" style="left:0;top:0;width:210px;height:149px;background:rgba(0,0,0,.38)"></div></div>
<div class="a" style="left:109px;top:406px;width:210px;height:149px;overflow:hidden;background:#fff"><div class="a" style="left:0;top:0;width:1190px;height:844px;transform:scale(0.17647058823529413);transform-origin:0 0"><div class="a" style="left:0;top:0;width:1190px;height:844px;background:#fff"></div>
<div class="s" style="left:71px;top:37px;font-size:24.2px">Артикуляционная гимнастика в стихах и картинках</div>
<div class="s" style="left:1091px;top:37px;font-size:24px">28</div>
<div class="ln" style="left:59px;top:68px;width:1068px;height:6px"></div>
<div class="ln" style="left:59px;top:389px;width:1068px;height:6px"></div>
<div class="ln" style="left:59px;top:716px;width:1074px;height:6px"></div>
<div class="ln" style="left:59px;top:68px;width:6px;height:649px"></div>
<div class="ln" style="left:593px;top:68px;width:6px;height:649px"></div>
<div class="ln" style="left:1126px;top:68px;width:6px;height:649px"></div>
<svg class="a" style="left:141px;top:74px" width="312" height="303" viewBox="0 0 312 303"><defs><linearGradient id="gbg" x1="0" y1="0" x2="1" y2="1"><stop offset="0" stop-color="#e8a0b8"/><stop offset=".5" stop-color="#c85a88"/><stop offset="1" stop-color="#e090b0"/></linearGradient></defs><rect width="312" height="303" fill="url(#gbg)"/><path d="M95 60 C130 10 240 10 280 70 C300 120 290 200 300 250 L240 270 C200 240 150 250 120 230 Z" fill="#5a3020"/><path d="M100 80 C120 70 150 80 160 110 L165 160 C180 190 170 230 140 260 L95 270 C60 250 40 230 35 215 C45 205 55 200 70 195 L60 170 C70 150 80 120 100 80 Z" fill="#f2c8a8"/><path d="M90 75 C140 40 220 60 250 110 L170 120 C150 90 120 80 90 100 Z" fill="#6a3a26"/><circle cx="205" cy="55" r="22" fill="#f070a0"/><path d="M140 275 C180 260 240 270 270 285 L270 303 L130 303 Z" fill="#f050a8"/><path d="M20 240 C50 220 90 230 110 250 C100 270 60 275 30 265 Z" fill="#f0c0a0"/><path d="M110 210 L135 205 L132 222 L108 222 Z" fill="#222"/></svg>
<svg class="a" style="left:699px;top:71px" width="210" height="310" viewBox="0 0 210 310"><ellipse cx="120" cy="265" rx="90" ry="40" fill="#8cc860"/><path d="M70 40 C80 10 130 5 150 30 L160 60 L80 65 Z" fill="#e23a2a"/><path d="M80 20 C95 0 130 0 145 20 L120 30 Z" fill="#3a9a40"/><circle cx="110" cy="75" r="25" fill="#f4c8a0"/><path d="M70 100 L160 100 L170 180 L80 180 Z" fill="#e03a30"/><path d="M85 175 L155 175 L160 225 L90 225 Z" fill="#3a6ac0"/><path d="M95 220 L80 275 L60 285 M140 220 L160 270 L180 275" stroke="#d04030" stroke-width="14" fill="none"/><ellipse cx="55" cy="165" rx="50" ry="18" fill="#f4f0f0"/><path d="M5 165 L5 215 C20 235 90 235 105 215 L105 165 C90 185 20 185 5 165 Z" fill="#e05a8a"/><path d="M10 195 L30 175 L50 200 L70 175 L90 200" stroke="#30b0b0" stroke-width="8" fill="none"/><path d="M140 110 C170 120 190 90 175 60" stroke="#f4c8a0" stroke-width="14" fill="none"/></svg>
<div class="s" style="left:71px;top:390.0px;font-size:28.2px;color:#333;font-weight:bold">28. «Барабанщик»</div>
<div class="s" style="left:71px;top:422.1px;font-size:28.2px;color:#333">Улыбнуться, открыть рот, поставить</div>
<div class="s" style="left:71px;top:454.2px;font-size:28.2px;color:#333">язычок за верхние зубы, звонко,</div>
<div class="s" style="left:71px;top:486.3px;font-size:28.2px;color:#333">отчетливо, многократно повторять : «Д-Д-</div>
<div class="s" style="left:71px;top:518.4px;font-size:28.2px;color:#333">Д…». Темп постепенно убыстрять, зубы</div>
<div class="s" style="left:71px;top:550.5px;font-size:28.2px;color:#333">не сближать. Потом добавить движение</div>
<div class="s" style="left:71px;top:582.6px;font-size:28.2px;color:#333">ватной палочкой, шариковым зондом или</div>
<div class="s" style="left:71px;top:614.7px;font-size:28.2px;color:#333">пальчиком поперек языка – получим звук,</div>
<div class="s" style="left:71px;top:646.8px;font-size:28.2px;color:#333">отдаленно напоминающий  Р.</div>
<div class="s" style="left:604px;top:390.0px;font-size:28.2px;color:#333">Барабанщик очень занят,</div>
<div class="s" style="left:604px;top:422.1px;font-size:28.2px;color:#333">Барабанщик барабанит,</div>
<div class="s" style="left:604px;top:454.2px;font-size:28.2px;color:#333">Д-д, д-д-д!</div></div><div class="a" style="left:0;top:0;width:210px;height:149px;background:rgba(0,0,0,.38)"></div></div>
<div class="a" style="left:100px;top:617px;width:228px;height:167px;background:#8ab4f8"></div>
<div class="a" style="left:109px;top:626px;width:210px;height:149px;overflow:hidden;background:#fff"><div class="a" style="left:0;top:0;width:1190px;height:844px;transform:scale(0.17647058823529413);transform-origin:0 0"><div class="a" style="left:0;top:0;width:1190px;height:844px;background:#fff"></div>
<div class="s" style="left:71px;top:38.2px;font-size:24.2px">Артикуляционная гимнастика в стихах и картинках</div>
<div class="s" style="left:1091.5px;top:38.2px;font-size:24px">29</div>
<div class="ln" style="left:59px;top:68px;width:1068px;height:6px"></div>
<div class="ln" style="left:59px;top:389px;width:1068px;height:6px"></div>
<div class="ln" style="left:59px;top:716px;width:1074px;height:6px"></div>
<div class="ln" style="left:59px;top:68px;width:6px;height:649px"></div>
<div class="ln" style="left:593px;top:68px;width:6px;height:649px"></div>
<div class="ln" style="left:1126px;top:68px;width:6px;height:649px"></div>
<div class="a" style="left:161px;top:76px;width:307px;height:305px;overflow:hidden"><svg width="307" height="305" viewBox="35 35 1017 1010" preserveAspectRatio="none">
<defs>
<filter id="mb" x="-10%" y="-10%" width="120%" height="120%"><feGaussianBlur stdDeviation="6"/></filter>
<filter id="mb3" x="-10%" y="-10%" width="120%" height="120%"><feGaussianBlur stdDeviation="4"/></filter>
<filter id="mb2" x="-10%" y="-10%" width="120%" height="120%"><feGaussianBlur stdDeviation="10"/></filter>
<radialGradient id="sk" cx="50%" cy="50%" r="72%"><stop offset="0.4" stop-color="#e3a47e"/><stop offset="1" stop-color="#f1c9a4"/></radialGradient>
<radialGradient id="lip" cx="52%" cy="50%" r="52%"><stop offset="0.5" stop-color="#b03c2c"/><stop offset="0.75" stop-color="#c8543e"/><stop offset="0.93" stop-color="#d0634a"/><stop offset="1" stop-color="#d9795e"/></radialGradient>
<radialGradient id="tg" cx="50%" cy="40%" r="60%"><stop offset="0" stop-color="#a05a46"/><stop offset="0.5" stop-color="#7e4234"/><stop offset="1" stop-color="#42201a"/></radialGradient>
</defs>
<rect x="35" y="35" width="1017" height="1010" fill="url(#sk)"/>
<path filter="url(#mb)" fill="url(#lip)" d="M100 650 C100 420 170 160 330 80 C450 35 650 50 790 120 C910 190 1000 370 1010 560 C1005 770 910 910 745 970 C600 1010 410 995 290 935 C160 870 100 780 100 650 Z"/>
<path filter="url(#mb2)" fill="#dc7a62" opacity=".5" d="M330 120 C450 80 640 90 760 150 C700 170 600 160 520 150 C440 145 380 150 330 120 Z"/>
<path filter="url(#mb3)" fill="#2e150f" d="M140 610 C150 480 200 330 260 285 C360 250 560 250 700 282 C820 320 930 420 978 520 C980 575 960 600 930 605 C850 640 760 700 640 735 C520 750 400 740 290 710 C210 680 160 650 140 610 Z"/>
<path filter="url(#mb)" fill="url(#tg)" d="M360 300 C470 280 620 280 730 300 C840 340 905 440 895 540 C880 640 790 705 640 735 C520 745 440 730 395 690 C360 600 345 420 360 300 Z"/>
<path filter="url(#mb3)" fill="#c98a70" opacity=".6" d="M560 300 L600 300 L585 510 L570 510 Z"/>
<g filter="url(#mb3)" fill="#ecd8c0" opacity=".85">
<circle cx="480" cy="330" r="7"/><circle cx="640" cy="400" r="9"/><circle cx="700" cy="420" r="8"/><circle cx="740" cy="355" r="10"/><circle cx="520" cy="470" r="8"/><circle cx="600" cy="540" r="9"/><circle cx="660" cy="520" r="7"/><circle cx="780" cy="490" r="8"/><circle cx="470" cy="560" r="7"/><circle cx="720" cy="560" r="7"/><circle cx="560" cy="590" r="6"/><circle cx="820" cy="450" r="6"/><circle cx="500" cy="400" r="6"/><circle cx="760" cy="400" r="7"/><circle cx="620" cy="600" r="6"/><circle cx="690" cy="470" r="6"/><circle cx="540" cy="520" r="5"/><circle cx="800" cy="360" r="7"/>
</g>
<path filter="url(#mb3)" fill="#f4ecd8" d="M280 262 C360 232 470 236 560 250 C640 262 690 272 720 290 C640 292 520 288 420 286 C360 288 320 296 290 306 Z"/>
<g filter="url(#mb3)" fill="#eee4ca">
<path d="M165 605 C200 595 230 610 240 650 L250 700 C225 710 190 700 175 670 Z"/>
<path d="M205 690 C240 680 280 690 300 720 L310 790 C280 800 240 790 220 760 Z"/>
<path d="M305 730 L420 738 L425 830 C380 840 330 830 310 810 Z"/>
<path d="M432 738 L580 742 L578 845 C530 855 470 852 435 838 Z" fill="#f4eedc"/>
<path d="M588 738 L690 728 L695 835 C660 845 620 848 590 842 Z" fill="#f2ead6"/>
<path d="M700 722 C740 700 780 690 800 700 L810 790 C780 810 740 825 702 830 Z" fill="#e6dab8"/>
<path d="M810 680 C840 650 870 640 890 650 L895 740 C870 760 840 775 815 785 Z" fill="#e2d6b4"/>
<path d="M880 615 C910 590 945 580 965 598 C960 650 935 690 900 720 Z" fill="#d8cca8"/>
</g>
<path filter="url(#mb2)" fill="#e07a62" opacity=".45" d="M320 880 C440 915 640 925 770 880 C730 940 610 970 490 960 C410 950 360 920 320 880 Z"/>
</svg>
</div>
<div class="a" style="left:661px;top:91px;width:300px;height:290px;overflow:hidden"><svg width="300" height="290" viewBox="0 0 1117 1080" preserveAspectRatio="none">
<defs><filter id="hb" x="-5%" y="-5%" width="110%" height="110%"><feGaussianBlur stdDeviation="2.5"/></filter></defs><g filter="url(#hb)">
<path d="M105 205 C100 130 140 75 190 62 C245 70 285 120 288 175 C285 215 245 230 190 232 C140 232 108 228 105 205 Z" fill="#e7a0cc" stroke="#b07090" stroke-width="5"/>
<path d="M165 120 C180 105 205 115 210 150 L205 205 L168 205 Z" fill="#fff"/><path d="M195 115 C215 140 220 180 208 212 L188 205 Z" fill="#7a5aa8"/>
<circle cx="110" cy="255" r="42" fill="none" stroke="#a08050" stroke-width="8"/><circle cx="258" cy="255" r="30" fill="none" stroke="#a08050" stroke-width="8"/><line x1="85" y1="232" x2="300" y2="228" stroke="#c09858" stroke-width="9"/><line x1="285" y1="140" x2="420" y2="140" stroke="#c8c0c8" stroke-width="4"/>
<g transform="translate(455 88) scale(-1.55 1.9)"><path d="M2 32 C4 20 8 8 16 2 L19 0 L21 4 C28 12 32 22 38 32 C55 34 75 32 88 36 C94 38 97 44 98 52 C100 62 99 72 97 80 L94 62 L93 70 L95 99 L89 99 L86 70 L80 66 L82 99 L76 99 L72 64 C60 66 50 66 42 64 L41 99 L35 99 L34 68 L30 99 L24 99 L26 64 C22 56 20 48 18 42 C14 40 10 40 6 42 C3 40 2 36 2 32 Z" fill="#f4eef0" stroke="#8a7a84" stroke-width="1.2" vector-effect="non-scaling-stroke"/></g>
<path d="M315 160 C345 140 385 150 395 185 L345 200 Z" fill="#f0b878"/><path d="M350 165 L400 165 L395 210 L355 205 Z" fill="#e070a8"/>
<g transform="translate(506 70) scale(2.84 2.62)"><path d="M2 32 C4 20 8 8 16 2 L19 0 L21 4 C28 12 32 22 38 32 C55 34 75 32 88 36 C94 38 97 44 98 52 C100 62 99 72 97 80 L94 62 L93 70 L95 99 L89 99 L86 70 L80 66 L82 99 L76 99 L72 64 C60 66 50 66 42 64 L41 99 L35 99 L34 68 L30 99 L24 99 L26 64 C22 56 20 48 18 42 C14 40 10 40 6 42 C3 40 2 36 2 32 Z" fill="#f2e0cc" stroke="#5a4030" stroke-width="1.4" vector-effect="non-scaling-stroke"/></g>
<path d="M640 135 L695 140 L690 200 L645 195 Z" fill="#8a5a40"/><path d="M530 90 C560 110 590 150 610 180" stroke="#5a4030" stroke-width="12" fill="none"/>
<path d="M582 195 L905 238 L900 252 L582 212 Z" fill="#f4d668"/>
<path d="M812 125 C850 95 1000 95 1047 120 L1047 232 L820 230 C805 200 805 150 812 125 Z" fill="#e5142a"/><path d="M880 228 L955 238 L935 290 L895 290 Z" fill="#d83a20"/>
<ellipse cx="978" cy="298" rx="48" ry="58" fill="#f7d760" stroke="#e4b840" stroke-width="5"/><circle cx="980" cy="298" r="7" fill="#806020"/>
<g transform="translate(65 392) scale(2.35 1.6)"><path d="M2 32 C4 20 8 8 16 2 L19 0 L21 4 C28 12 32 22 38 32 C55 34 75 32 88 36 C94 38 97 44 98 52 C100 62 99 72 97 80 L94 62 L93 70 L95 99 L89 99 L86 70 L80 66 L82 99 L76 99 L72 64 C60 66 50 66 42 64 L41 99 L35 99 L34 68 L30 99 L24 99 L26 64 C22 56 20 48 18 42 C14 40 10 40 6 42 C3 40 2 36 2 32 Z" fill="#262626" stroke="none" stroke-width="0" vector-effect="non-scaling-stroke"/></g>
<path d="M372 372 C400 352 462 358 478 375 L470 470 L385 470 C375 430 368 400 372 372 Z" fill="#2e2e2e"/><path d="M335 418 L368 418 L372 482 L335 482 Z" fill="#454545"/><line x1="250" y1="462" x2="380" y2="455" stroke="#666" stroke-width="5"/>
<circle cx="308" cy="522" r="37" fill="#f6f2ea" stroke="#8a8070" stroke-width="7"/><circle cx="455" cy="512" r="50" fill="#f6f2ea" stroke="#8a8070" stroke-width="7"/>
<g transform="translate(545 368) scale(2.77 2.44)"><path d="M2 32 C4 20 8 8 16 2 L19 0 L21 4 C28 12 32 22 38 32 C55 34 75 32 88 36 C94 38 97 44 98 52 C100 62 99 72 97 80 L94 62 L93 70 L95 99 L89 99 L86 70 L80 66 L82 99 L76 99 L72 64 C60 66 50 66 42 64 L41 99 L35 99 L34 68 L30 99 L24 99 L26 64 C22 56 20 48 18 42 C14 40 10 40 6 42 C3 40 2 36 2 32 Z" fill="#3e342e" stroke="none" stroke-width="0" vector-effect="non-scaling-stroke"/></g>
<path d="M835 400 L1047 402 L1047 488 L835 480 Z" fill="#5e7e3a"/><path d="M835 470 L1047 478 L1047 510 L835 500 Z" fill="#b04a30"/><line x1="640" y1="545" x2="900" y2="545" stroke="#c8c0b0" stroke-width="5"/>
<circle cx="955" cy="568" r="60" fill="none" stroke="#cac6be" stroke-width="9"/><path d="M955 510 L955 626 M897 568 L1013 568 M915 528 L995 608 M995 528 L915 608" stroke="#cac6be" stroke-width="5"/>
<path d="M320 720 C365 690 425 725 420 805 C418 870 400 915 385 925 C385 862 372 805 335 775 Z" fill="#5a5a5a"/>
<g transform="translate(62 632) scale(2.95 3.58)"><path d="M0 20 C3 13 8 6 15 0 L18 3 C24 10 28 20 36 34 C52 38 70 37 86 39 C94 41 97 49 96 59 L99 96 L92 99 L87 66 L80 63 L83 96 L76 98 L72 65 C58 67 46 67 38 63 L31 95 L24 97 L28 66 C25 62 23 57 22 50 L15 92 L8 94 L15 50 C13 42 12 36 11 30 C7 28 2 26 0 20 Z" fill="#d9d9dd" stroke="#3a3a3a" stroke-width="1.3" vector-effect="non-scaling-stroke"/></g>
<path d="M125 960 L150 985 M105 965 L90 985 M320 965 L335 990 M345 950 L365 975" stroke="#1a1a1a" stroke-width="16"/>
<path d="M165 760 L275 748 L335 770 L330 850 L205 862 L168 825 Z" fill="#e0442c"/><path d="M205 782 L292 775 L300 830 L212 840 Z" fill="#f2e4d4"/><path d="M85 705 L150 772 L172 755 L112 690 Z" fill="#b84a24"/><path d="M160 745 L345 760" stroke="#d0a040" stroke-width="8"/>
<path d="M508 915 C560 985 820 1010 982 950 L980 975 C820 1040 560 1010 505 945 Z" fill="#d85a64" stroke="#a83848" stroke-width="4"/>
<path d="M520 960 C600 1010 820 1030 975 985" stroke="#c84a58" stroke-width="12" fill="none"/>
<path d="M690 965 C700 900 800 880 870 930 L880 965 L840 965 C820 930 760 925 735 968 Z" fill="#2a48a0"/>
<line x1="630" y1="850" x2="622" y2="945" stroke="#555" stroke-width="8"/>
<path d="M722 800 L960 700 L975 720 L950 900 L770 905 C740 880 725 840 722 800 Z" fill="#9a3040"/>
<path d="M800 800 L850 860 L900 780 L940 830" stroke="#3a8a5a" stroke-width="12" fill="none"/><path d="M760 860 L820 840" stroke="#3a8a5a" stroke-width="10"/>
<path d="M728 775 C760 700 850 680 950 700 C940 760 900 800 850 820 C800 840 750 830 728 775 Z" fill="#d42a3a"/>
<g fill="#b81e30"><circle cx="780" cy="740" r="22"/><circle cx="840" cy="715" r="24"/><circle cx="900" cy="720" r="20"/><circle cx="810" cy="790" r="20"/><circle cx="880" cy="770" r="18"/></g>
<path d="M612 652 L635 668 C670 700 700 760 705 830 L690 880 L645 870 C640 820 630 790 612 775 L590 770 L588 740 L600 700 Z" fill="#d8506a"/>
<path d="M640 668 C690 690 725 760 718 860 L690 870 C695 790 675 720 625 690 Z" fill="#283c8e"/>
</g></svg></div>
<div class="s" style="left:71px;top:391.1px;font-size:32.2px;font-weight:bold">29. «Лошадка»</div>
<div class="s" style="left:71px;top:428.2px;font-size:32.4px">Улыбнуться, широко открыть рот</div>
<div class="s" style="left:71px;top:464.1px;font-size:32.5px">пощелкать кончиком языка наверху.</div>
<div class="s" style="left:71px;top:501.7px;font-size:32.5px">Ускоряем темп. Следить за тем,</div>
<div class="s" style="left:71px;top:537.8px;font-size:32.3px">чтобы нижняя челюсть не двигалась.</div>
<div class="s" style="left:604px;top:391.1px;font-size:32px">Едем, едем на лошадке,</div>
<div class="s" style="left:604px;top:427.5px;font-size:32.25px">По дорожке ровной, гладкой.</div></div></div>
<div class="a" style="left:109px;top:846px;width:210px;height:149px;overflow:hidden;background:#fff"><div class="a" style="left:0;top:0;width:1190px;height:844px;transform:scale(0.17647058823529413);transform-origin:0 0"><div class="a" style="left:0;top:0;width:1190px;height:844px;background:#fff"></div>
<div class="s" style="left:71px;top:37px;font-size:24.2px">Артикуляционная гимнастика в стихах и картинках</div>
<div class="s" style="left:1091px;top:37px;font-size:24px">30</div>
<div class="ln" style="left:59px;top:68px;width:1068px;height:6px"></div>
<div class="ln" style="left:59px;top:389px;width:1068px;height:6px"></div>
<div class="ln" style="left:59px;top:716px;width:1074px;height:6px"></div>
<div class="ln" style="left:59px;top:68px;width:6px;height:649px"></div>
<div class="ln" style="left:593px;top:68px;width:6px;height:649px"></div>
<div class="ln" style="left:1126px;top:68px;width:6px;height:649px"></div>
<svg class="a" style="left:142px;top:77px" width="266" height="311" viewBox="0 0 266 311"><rect width="266" height="311" fill="#f2e8e0"/><path d="M0 0 L150 0 C120 60 140 110 200 140 L266 150 L266 311 L0 311 Z" fill="#e8c0a0"/><path d="M50 150 C90 90 200 80 250 110 C240 200 180 270 120 280 C80 270 50 220 50 150 Z" fill="#c85848"/><path d="M80 150 C120 110 200 110 235 125 C230 180 190 230 140 245 C110 240 85 200 80 150 Z" fill="#3a1e1a"/><path d="M75 140 C120 100 200 100 240 118 L230 140 C190 125 120 130 85 165 Z" fill="#f4ecd8"/><path d="M110 235 C150 225 200 200 225 170 L230 190 C200 230 150 250 120 255 Z" fill="#f0e6d0"/></svg>
<svg class="a" style="left:674px;top:95px" width="312" height="265" viewBox="0 0 312 265"><g><path d="M10 40 C20 5 80 5 95 40 Z" fill="#b87830"/><rect x="40" y="40" width="22" height="40" fill="#f0e0c0"/><path d="M110 45 C120 10 175 10 185 45 Z" fill="#e0a848"/><rect x="135" y="45" width="22" height="35" fill="#f4e8d0"/><path d="M210 40 C220 5 290 5 300 45 Z" fill="#d89838"/><rect x="245" y="45" width="20" height="45" fill="#f4e8d0"/><path d="M10 140 C20 105 90 100 105 140 Z" fill="#986838"/><rect x="45" y="140" width="20" height="30" fill="#e8d8c0"/><path d="M120 140 C130 110 175 110 190 140 Z" fill="#e0a040"/><path d="M200 130 C210 100 250 100 260 130 Z" fill="#e8b050"/><circle cx="280" cy="115" r="18" fill="#603828"/><rect x="275" y="130" width="8" height="70" fill="#f0e0d0"/><path d="M20 230 C35 205 100 205 110 230 Z" fill="#4a2a2a"/><path d="M130 225 C150 195 210 195 230 225 Z" fill="#e0b060"/><path d="M180 240 C200 215 250 215 265 240 Z" fill="#d8a048"/></g></svg>
<div class="s" style="left:71px;top:390.0px;font-size:28.2px;color:#333;font-weight:bold">30. «Грибок»</div>
<div class="s" style="left:71px;top:422.1px;font-size:28.2px;color:#333">Улыбнуться, присосать язык к нёбу,</div>
<div class="s" style="left:71px;top:454.2px;font-size:28.2px;color:#333">чтобы подъязычная связка</div>
<div class="s" style="left:71px;top:486.3px;font-size:28.2px;color:#333">натянулась (ножка грибка).</div>
<div class="s" style="left:71px;top:518.4px;font-size:28.2px;color:#333">Удерживать в таком положении язык</div>
<div class="s" style="left:71px;top:550.5px;font-size:28.2px;color:#333">в течение 5-10 минут. Если  так</div>
<div class="s" style="left:71px;top:582.6px;font-size:28.2px;color:#333">сделать не удастся, то вернуться к</div>
<div class="s" style="left:71px;top:614.7px;font-size:28.2px;color:#333">упражнению «лошадка».</div>
<div class="s" style="left:604px;top:390.0px;font-size:28.2px;color:#333">Я стою на ножке тонкой,</div>
<div class="s" style="left:604px;top:422.1px;font-size:28.2px;color:#333">Я стою на ножке гладкой,</div>
<div class="s" style="left:604px;top:454.2px;font-size:28.2px;color:#333">Под коричневою шляпкой</div>
<div class="s" style="left:604px;top:486.3px;font-size:28.2px;color:#333">С бархатной подкладкой</div></div><div class="a" style="left:0;top:0;width:210px;height:149px;background:rgba(0,0,0,.38)"></div></div>
<div class="a ui" style="left:164px;top:353px;width:100px;text-align:center;font-size:18px;line-height:20px;color:#fff">27</div>
<div class="a ui" style="left:164px;top:573px;width:100px;text-align:center;font-size:18px;line-height:20px;color:#fff">28</div>
<div class="a ui" style="left:164px;top:793px;width:100px;text-align:center;font-size:18px;line-height:20px;color:#fff">29</div>
<div class="a ui" style="left:164px;top:1013px;width:100px;text-align:center;font-size:18px;line-height:20px;color:#fff">30</div>
</div>
</div>
<div id="sscroll" class="a">
<svg class="a" style="left:6.5px;top:7.5px" width="9" height="8" viewBox="0 0 9 8"><path d="M0.5 5 L4.5 0.5 L8.5 5 V7.5 L4.5 3.5 L0.5 7.5 Z" fill="#505050"/></svg>
<div class="a" style="left:0;top:481px;width:22px;height:62px;background:#cdcdcd"></div>
<svg class="a" style="left:6.5px;top:780px" width="9" height="8" viewBox="0 0 9 8"><path d="M0.5 3 L4.5 7.5 L8.5 3 V0.5 L4.5 4.5 L0.5 0.5 Z" fill="#505050"/></svg>
</div>
<div id="main" class="a">
<div class="a" style="left:-450px;top:-236px;width:1920px;height:1080px">
<div class="page" style="left:579px;top:-100px;width:1190px;height:577px"></div>
<div class="ln" style="left:638px;top:100px;width:1px;height:249px"></div>
<div class="ln" style="left:1172px;top:100px;width:1px;height:249px"></div>
<div class="ln" style="left:1705px;top:100px;width:1px;height:249px"></div>
<div class="ln" style="left:638px;top:348px;width:1068px;height:1px"></div>
<div class="s" style="left:650px;top:221.4px;font-size:28.2px">ватной палочкой, шариковым зондом или</div>
<div class="s" style="left:650px;top:253.5px;font-size:28.2px">пальчиком поперек языка – получим звук,</div>
<div class="s" style="left:650px;top:285.8px;font-size:28.2px">отдаленно напоминающий  Р.</div>
<div class="page" style="left:579px;top:499px;width:1190px;height:844px"></div>
<div class="a" style="left:579px;top:499px;width:1190px;height:844px"><div class="a" style="left:0;top:0;width:1190px;height:844px;background:#fff"></div>
<div class="s" style="left:71px;top:38.2px;font-size:24.2px">Артикуляционная гимнастика в стихах и картинках</div>
<div class="s" style="left:1091.5px;top:38.2px;font-size:24px">29</div>
<div class="ln" style="left:59px;top:68px;width:1068px;height:1px"></div>
<div class="ln" style="left:59px;top:389px;width:1068px;height:1px"></div>
<div class="ln" style="left:59px;top:716px;width:1069px;height:1px"></div>
<div class="ln" style="left:59px;top:68px;width:1px;height:649px"></div>
<div class="ln" style="left:593px;top:68px;width:1px;height:649px"></div>
<div class="ln" style="left:1126px;top:68px;width:1px;height:649px"></div>
<div class="a" style="left:161px;top:76px;width:307px;height:305px;overflow:hidden"><svg width="307" height="305" viewBox="35 35 1017 1010" preserveAspectRatio="none">
<defs>
<filter id="mb" x="-10%" y="-10%" width="120%" height="120%"><feGaussianBlur stdDeviation="6"/></filter>
<filter id="mb3" x="-10%" y="-10%" width="120%" height="120%"><feGaussianBlur stdDeviation="4"/></filter>
<filter id="mb2" x="-10%" y="-10%" width="120%" height="120%"><feGaussianBlur stdDeviation="10"/></filter>
<radialGradient id="sk" cx="50%" cy="50%" r="72%"><stop offset="0.4" stop-color="#e3a47e"/><stop offset="1" stop-color="#f1c9a4"/></radialGradient>
<radialGradient id="lip" cx="52%" cy="50%" r="52%"><stop offset="0.5" stop-color="#b03c2c"/><stop offset="0.75" stop-color="#c8543e"/><stop offset="0.93" stop-color="#d0634a"/><stop offset="1" stop-color="#d9795e"/></radialGradient>
<radialGradient id="tg" cx="50%" cy="40%" r="60%"><stop offset="0" stop-color="#a05a46"/><stop offset="0.5" stop-color="#7e4234"/><stop offset="1" stop-color="#42201a"/></radialGradient>
</defs>
<rect x="35" y="35" width="1017" height="1010" fill="url(#sk)"/>
<path filter="url(#mb)" fill="url(#lip)" d="M100 650 C100 420 170 160 330 80 C450 35 650 50 790 120 C910 190 1000 370 1010 560 C1005 770 910 910 745 970 C600 1010 410 995 290 935 C160 870 100 780 100 650 Z"/>
<path filter="url(#mb2)" fill="#dc7a62" opacity=".5" d="M330 120 C450 80 640 90 760 150 C700 170 600 160 520 150 C440 145 380 150 330 120 Z"/>
<path filter="url(#mb3)" fill="#2e150f" d="M140 610 C150 480 200 330 260 285 C360 250 560 250 700 282 C820 320 930 420 978 520 C980 575 960 600 930 605 C850 640 760 700 640 735 C520 750 400 740 290 710 C210 680 160 650 140 610 Z"/>
<path filter="url(#mb)" fill="url(#tg)" d="M360 300 C470 280 620 280 730 300 C840 340 905 440 895 540 C880 640 790 705 640 735 C520 745 440 730 395 690 C360 600 345 420 360 300 Z"/>
<path filter="url(#mb3)" fill="#c98a70" opacity=".6" d="M560 300 L600 300 L585 510 L570 510 Z"/>
<g filter="url(#mb3)" fill="#ecd8c0" opacity=".85">
<circle cx="480" cy="330" r="7"/><circle cx="640" cy="400" r="9"/><circle cx="700" cy="420" r="8"/><circle cx="740" cy="355" r="10"/><circle cx="520" cy="470" r="8"/><circle cx="600" cy="540" r="9"/><circle cx="660" cy="520" r="7"/><circle cx="780" cy="490" r="8"/><circle cx="470" cy="560" r="7"/><circle cx="720" cy="560" r="7"/><circle cx="560" cy="590" r="6"/><circle cx="820" cy="450" r="6"/><circle cx="500" cy="400" r="6"/><circle cx="760" cy="400" r="7"/><circle cx="620" cy="600" r="6"/><circle cx="690" cy="470" r="6"/><circle cx="540" cy="520" r="5"/><circle cx="800" cy="360" r="7"/>
</g>
<path filter="url(#mb3)" fill="#f4ecd8" d="M280 262 C360 232 470 236 560 250 C640 262 690 272 720 290 C640 292 520 288 420 286 C360 288 320 296 290 306 Z"/>
<g filter="url(#mb3)" fill="#eee4ca">
<path d="M165 605 C200 595 230 610 240 650 L250 700 C225 710 190 700 175 670 Z"/>
<path d="M205 690 C240 680 280 690 300 720 L310 790 C280 800 240 790 220 760 Z"/>
<path d="M305 730 L420 738 L425 830 C380 840 330 830 310 810 Z"/>
<path d="M432 738 L580 742 L578 845 C530 855 470 852 435 838 Z" fill="#f4eedc"/>
<path d="M588 738 L690 728 L695 835 C660 845 620 848 590 842 Z" fill="#f2ead6"/>
<path d="M700 722 C740 700 780 690 800 700 L810 790 C780 810 740 825 702 830 Z" fill="#e6dab8"/>
<path d="M810 680 C840 650 870 640 890 650 L895 740 C870 760 840 775 815 785 Z" fill="#e2d6b4"/>
<path d="M880 615 C910 590 945 580 965 598 C960 650 935 690 900 720 Z" fill="#d8cca8"/>
</g>
<path filter="url(#mb2)" fill="#e07a62" opacity=".45" d="M320 880 C440 915 640 925 770 880 C730 940 610 970 490 960 C410 950 360 920 320 880 Z"/>
</svg>
</div>
<div class="a" style="left:661px;top:91px;width:300px;height:290px;overflow:hidden"><svg width="300" height="290" viewBox="0 0 1117 1080" preserveAspectRatio="none">
<defs><filter id="hb" x="-5%" y="-5%" width="110%" height="110%"><feGaussianBlur stdDeviation="2.5"/></filter></defs><g filter="url(#hb)">
<path d="M105 205 C100 130 140 75 190 62 C245 70 285 120 288 175 C285 215 245 230 190 232 C140 232 108 228 105 205 Z" fill="#e7a0cc" stroke="#b07090" stroke-width="5"/>
<path d="M165 120 C180 105 205 115 210 150 L205 205 L168 205 Z" fill="#fff"/><path d="M195 115 C215 140 220 180 208 212 L188 205 Z" fill="#7a5aa8"/>
<circle cx="110" cy="255" r="42" fill="none" stroke="#a08050" stroke-width="8"/><circle cx="258" cy="255" r="30" fill="none" stroke="#a08050" stroke-width="8"/><line x1="85" y1="232" x2="300" y2="228" stroke="#c09858" stroke-width="9"/><line x1="285" y1="140" x2="420" y2="140" stroke="#c8c0c8" stroke-width="4"/>
<g transform="translate(455 88) scale(-1.55 1.9)"><path d="M2 32 C4 20 8 8 16 2 L19 0 L21 4 C28 12 32 22 38 32 C55 34 75 32 88 36 C94 38 97 44 98 52 C100 62 99 72 97 80 L94 62 L93 70 L95 99 L89 99 L86 70 L80 66 L82 99 L76 99 L72 64 C60 66 50 66 42 64 L41 99 L35 99 L34 68 L30 99 L24 99 L26 64 C22 56 20 48 18 42 C14 40 10 40 6 42 C3 40 2 36 2 32 Z" fill="#f4eef0" stroke="#8a7a84" stroke-width="1.2" vector-effect="non-scaling-stroke"/></g>
<path d="M315 160 C345 140 385 150 395 185 L345 200 Z" fill="#f0b878"/><path d="M350 165 L400 165 L395 210 L355 205 Z" fill="#e070a8"/>
<g transform="translate(506 70) scale(2.84 2.62)"><path d="M2 32 C4 20 8 8 16 2 L19 0 L21 4 C28 12 32 22 38 32 C55 34 75 32 88 36 C94 38 97 44 98 52 C100 62 99 72 97 80 L94 62 L93 70 L95 99 L89 99 L86 70 L80 66 L82 99 L76 99 L72 64 C60 66 50 66 42 64 L41 99 L35 99 L34 68 L30 99 L24 99 L26 64 C22 56 20 48 18 42 C14 40 10 40 6 42 C3 40 2 36 2 32 Z" fill="#f2e0cc" stroke="#5a4030" stroke-width="1.4" vector-effect="non-scaling-stroke"/></g>
<path d="M640 135 L695 140 L690 200 L645 195 Z" fill="#8a5a40"/><path d="M530 90 C560 110 590 150 610 180" stroke="#5a4030" stroke-width="12" fill="none"/>
<path d="M582 195 L905 238 L900 252 L582 212 Z" fill="#f4d668"/>
<path d="M812 125 C850 95 1000 95 1047 120 L1047 232 L820 230 C805 200 805 150 812 125 Z" fill="#e5142a"/><path d="M880 228 L955 238 L935 290 L895 290 Z" fill="#d83a20"/>
<ellipse cx="978" cy="298" rx="48" ry="58" fill="#f7d760" stroke="#e4b840" stroke-width="5"/><circle cx="980" cy="298" r="7" fill="#806020"/>
<g transform="translate(65 392) scale(2.35 1.6)"><path d="M2 32 C4 20 8 8 16 2 L19 0 L21 4 C28 12 32 22 38 32 C55 34 75 32 88 36 C94 38 97 44 98 52 C100 62 99 72 97 80 L94 62 L93 70 L95 99 L89 99 L86 70 L80 66 L82 99 L76 99 L72 64 C60 66 50 66 42 64 L41 99 L35 99 L34 68 L30 99 L24 99 L26 64 C22 56 20 48 18 42 C14 40 10 40 6 42 C3 40 2 36 2 32 Z" fill="#262626" stroke="none" stroke-width="0" vector-effect="non-scaling-stroke"/></g>
<path d="M372 372 C400 352 462 358 478 375 L470 470 L385 470 C375 430 368 400 372 372 Z" fill="#2e2e2e"/><path d="M335 418 L368 418 L372 482 L335 482 Z" fill="#454545"/><line x1="250" y1="462" x2="380" y2="455" stroke="#666" stroke-width="5"/>
<circle cx="308" cy="522" r="37" fill="#f6f2ea" stroke="#8a8070" stroke-width="7"/><circle cx="455" cy="512" r="50" fill="#f6f2ea" stroke="#8a8070" stroke-width="7"/>
<g transform="translate(545 368) scale(2.77 2.44)"><path d="M2 32 C4 20 8 8 16 2 L19 0 L21 4 C28 12 32 22 38 32 C55 34 75 32 88 36 C94 38 97 44 98 52 C100 62 99 72 97 80 L94 62 L93 70 L95 99 L89 99 L86 70 L80 66 L82 99 L76 99 L72 64 C60 66 50 66 42 64 L41 99 L35 99 L34 68 L30 99 L24 99 L26 64 C22 56 20 48 18 42 C14 40 10 40 6 42 C3 40 2 36 2 32 Z" fill="#3e342e" stroke="none" stroke-width="0" vector-effect="non-scaling-stroke"/></g>
<path d="M835 400 L1047 402 L1047 488 L835 480 Z" fill="#5e7e3a"/><path d="M835 470 L1047 478 L1047 510 L835 500 Z" fill="#b04a30"/><line x1="640" y1="545" x2="900" y2="545" stroke="#c8c0b0" stroke-width="5"/>
<circle cx="955" cy="568" r="60" fill="none" stroke="#cac6be" stroke-width="9"/><path d="M955 510 L955 626 M897 568 L1013 568 M915 528 L995 608 M995 528 L915 608" stroke="#cac6be" stroke-width="5"/>
<path d="M320 720 C365 690 425 725 420 805 C418 870 400 915 385 925 C385 862 372 805 335 775 Z" fill="#5a5a5a"/>
<g transform="translate(62 632) scale(2.95 3.58)"><path d="M0 20 C3 13 8 6 15 0 L18 3 C24 10 28 20 36 34 C52 38 70 37 86 39 C94 41 97 49 96 59 L99 96 L92 99 L87 66 L80 63 L83 96 L76 98 L72 65 C58 67 46 67 38 63 L31 95 L24 97 L28 66 C25 62 23 57 22 50 L15 92 L8 94 L15 50 C13 42 12 36 11 30 C7 28 2 26 0 20 Z" fill="#d9d9dd" stroke="#3a3a3a" stroke-width="1.3" vector-effect="non-scaling-stroke"/></g>
<path d="M125 960 L150 985 M105 965 L90 985 M320 965 L335 990 M345 950 L365 975" stroke="#1a1a1a" stroke-width="16"/>
<path d="M165 760 L275 748 L335 770 L330 850 L205 862 L168 825 Z" fill="#e0442c"/><path d="M205 782 L292 775 L300 830 L212 840 Z" fill="#f2e4d4"/><path d="M85 705 L150 772 L172 755 L112 690 Z" fill="#b84a24"/><path d="M160 745 L345 760" stroke="#d0a040" stroke-width="8"/>
<path d="M508 915 C560 985 820 1010 982 950 L980 975 C820 1040 560 1010 505 945 Z" fill="#d85a64" stroke="#a83848" stroke-width="4"/>
<path d="M520 960 C600 1010 820 1030 975 985" stroke="#c84a58" stroke-width="12" fill="none"/>
<path d="M690 965 C700 900 800 880 870 930 L880 965 L840 965 C820 930 760 925 735 968 Z" fill="#2a48a0"/>
<line x1="630" y1="850" x2="622" y2="945" stroke="#555" stroke-width="8"/>
<path d="M722 800 L960 700 L975 720 L950 900 L770 905 C740 880 725 840 722 800 Z" fill="#9a3040"/>
<path d="M800 800 L850 860 L900 780 L940 830" stroke="#3a8a5a" stroke-width="12" fill="none"/><path d="M760 860 L820 840" stroke="#3a8a5a" stroke-width="10"/>
<path d="M728 775 C760 700 850 680 950 700 C940 760 900 800 850 820 C800 840 750 830 728 775 Z" fill="#d42a3a"/>
<g fill="#b81e30"><circle cx="780" cy="740" r="22"/><circle cx="840" cy="715" r="24"/><circle cx="900" cy="720" r="20"/><circle cx="810" cy="790" r="20"/><circle cx="880" cy="770" r="18"/></g>
<path d="M612 652 L635 668 C670 700 700 760 705 830 L690 880 L645 870 C640 820 630 790 612 775 L590 770 L588 740 L600 700 Z" fill="#d8506a"/>
<path d="M640 668 C690 690 725 760 718 860 L690 870 C695 790 675 720 625 690 Z" fill="#283c8e"/>
</g></svg></div>
<div class="hl" style="left:295px;top:507px;width:20px;height:23px"></div>
<div class="hl" style="left:315px;top:514px;width:93px;height:16px"></div>
<div class="hl" style="left:417px;top:514px;width:27px;height:16px"></div>
<div class="hl" style="left:451px;top:514px;width:48px;height:16px"></div>
<div class="s" style="left:71px;top:391.1px;font-size:32.2px;font-weight:bold">29. «Лошадка»</div>
<div class="s" style="left:71px;top:428.2px;font-size:32.4px">Улыбнуться, широко открыть рот</div>
<div class="s" style="left:71px;top:464.1px;font-size:32.5px">пощелкать кончиком языка наверху.</div>
<div class="s" style="left:71px;top:501.7px;font-size:32.5px">Ускоряем темп. Следить за тем,</div>
<div class="s" style="left:71px;top:537.8px;font-size:32.3px">чтобы нижняя челюсть не двигалась.</div>
<div class="s" style="left:604px;top:391.1px;font-size:32px">Едем, едем на лошадке,</div>
<div class="s" style="left:604px;top:427.5px;font-size:32.25px">По дорожке ровной, гладкой.</div></div>
</div>
</div>
<div id="mscroll" class="a">
<svg class="a" style="left:6.5px;top:7.5px" width="9" height="8" viewBox="0 0 9 8"><path d="M0.5 5 L4.5 0.5 L8.5 5 V7.5 L4.5 3.5 L0.5 7.5 Z" fill="#505050"/></svg>
<div class="a" style="left:0;top:510px;width:22px;height:45px;background:#cdcdcd"></div>
<svg class="a" style="left:6.5px;top:780px" width="9" height="8" viewBox="0 0 9 8"><path d="M0.5 3 L4.5 7.5 L8.5 3 V0.5 L4.5 4.5 L0.5 0.5 Z" fill="#505050"/></svg>
</div>
<div id="task" class="a">
<div class="a" style="left:0;top:-1030px;width:1920px;height:1080px">
<svg class="a" style="left:20px;top:1044.5px" width="20" height="20" viewBox="0 0 20 20"><path d="M0 2.8 L8.2 1.7 V9.5 H0 Z M9.3 1.5 L20 0 V9.5 H9.3 Z M0 10.5 H8.2 V18.3 L0 17.2 Z M9.3 10.5 H20 V20 L9.3 18.5 Z" fill="#fff"/></svg>
<div class="a" style="left:60px;top:1030px;width:430px;height:50px;background:#f2f2f2;border-left:1px solid #b8b8b8"></div>
<svg class="a" style="left:75px;top:1044px" width="21" height="22" viewBox="0 0 21 22"><circle cx="12.5" cy="8.5" r="7" fill="none" stroke="#000" stroke-width="1.5"/><path d="M7.5 13.5 L1 20.5" stroke="#000" stroke-width="1.7"/></svg>
<div class="a ui" style="left:110.5px;top:1044px;font-size:18.2px;line-height:24px;color:#1e1e1e;white-space:pre">Введите здесь текст для поиска</div>
<svg class="a" style="left:509px;top:1044px" width="22" height="21" viewBox="0 0 22 21"><path d="M1 1 V3 H14 V1 M1 20 V18 H14 V20" stroke="#fff" stroke-width="1.2" fill="none"/><rect x="1.5" y="6" width="12" height="9" fill="none" stroke="#fff" stroke-width="1.2"/><path d="M19.5 1 V20" stroke="#fff" stroke-width="1.2"/><rect x="18" y="9" width="3" height="3" fill="#fff"/></svg>
<svg class="a" style="left:569.5px;top:1042.5px" width="28" height="24" viewBox="0 0 28 24"><path d="M0 2 C0 1 1 0 2 0 H10 L12 2 H26 C27 2 28 3 28 4 V21 C28 22.5 27 23 26 23 H2 C1 23 0 22.5 0 21 Z" fill="#f9d567"/><path d="M0 2 C0 1 1 0 2 0 H10 L12 2 V5 H0 Z" fill="#e8a818"/><path d="M5 24 V12 H23 V24 H19 V16 H9 V24 Z" fill="#2e8ae6"/></svg>
<div class="a" style="left:616px;top:1030px;width:61px;height:50px;background:#5f6560"></div>
<div class="a" style="left:616px;top:1077px;width:61px;height:3px;background:#f6b4e0"></div>
<div class="a" style="left:683px;top:1077px;width:51px;height:3px;background:#f6b4e0"></div>
<svg class="a" style="left:631px;top:1040.5px" width="29" height="29" viewBox="0 0 29 29"><defs><linearGradient id="og2" x1="0" x2="1" y1="0" y2="0"><stop offset="0" stop-color="#ff1b2d"/><stop offset=".55" stop-color="#e8101e"/><stop offset="1" stop-color="#a0000f"/></linearGradient></defs><ellipse cx="14.5" cy="14.5" rx="14.2" ry="14.4" fill="url(#og2)"/><ellipse cx="15.2" cy="14.5" rx="7" ry="10.2" fill="#5f6560"/></svg>
<svg class="a" style="left:692.5px;top:1041px" width="30" height="28" viewBox="0 0 30 28"><rect x="7" y="0" width="23" height="28" rx="1.5" fill="#2a5cc0"/><rect x="7" y="0" width="23" height="7" fill="#41a5ee"/><rect x="7" y="7" width="23" height="7" fill="#2b7cd3"/><rect x="7" y="14" width="23" height="7" fill="#185abd"/><rect x="0" y="6" width="16" height="16" rx="1.5" fill="#185abd"/><path d="M2.5 10 L4.5 18 L6.5 12 L8.5 18 L10.5 10" stroke="#fff" stroke-width="1.4" fill="none"/></svg>
<svg class="a" style="left:1428px;top:1042px" width="28" height="25" viewBox="0 0 28 25"><circle cx="14" cy="12" r="11" fill="#f5c440"/><path d="M0 16 C4 13 8 14 10 15 C13 12 19 12 22 15 C25 15 27 16 28 17 C20 19 8 19 0 16 Z" fill="#c8b8a0"/><path d="M4 18 C10 20 18 20 24 18" stroke="#e0d0b8" stroke-width="2" fill="none"/></svg>
<div class="a ui" style="left:1466px;top:1045px;font-size:18px;line-height:22px;color:#fff;white-space:pre">-11°C  Дым</div>
<svg class="a" style="left:1579px;top:1049px" width="18" height="12" viewBox="0 0 18 12"><path d="M1 11 L9 2 L17 11" stroke="#fff" stroke-width="1.5" fill="none"/></svg>
<svg class="a" style="left:1607px;top:1045px" width="24" height="22" viewBox="0 0 24 22"><path d="M1 2 L20 0.5 V16 L1 18 Z" fill="none" stroke="#fff" stroke-width="1.3"/><path d="M7 10 C7 6 11 5 13 7 M13 9 C13 13 9 14 7 12" stroke="#fff" stroke-width="1.2" fill="none"/><circle cx="17" cy="16" r="4.2" fill="#2e7fd8"/></svg>
<svg class="a" style="left:1637px;top:1046px" width="22" height="16" viewBox="0 0 22 16"><rect x="4.5" y="4" width="14.5" height="10" fill="#fff" stroke="#fff" stroke-width="1"/><rect x="19.5" y="6.5" width="2" height="5" fill="#fff"/><path d="M1.5 0.5 V3.5 M4 0.5 V3.5 M0.5 3.5 H5 C5 6 4 7 2.8 7 V11" stroke="#fff" stroke-width="1.1" fill="none"/></svg>
<svg class="a" style="left:1670px;top:1047px" width="18" height="16" viewBox="0 0 18 16"><path d="M1 15 A14 14 0 0 1 15 1 M4.5 15 A10.5 10.5 0 0 1 15 4.5 M8 15 A7 7 0 0 1 15 8" stroke="#fff" stroke-width="1.2" fill="none"/><circle cx="14.5" cy="14" r="1.6" fill="#fff"/></svg>
<svg class="a" style="left:1697px;top:1047px" width="22" height="17" viewBox="0 0 22 17"><path d="M1 5.5 H5 L10 1 V16 L5 11.5 H1 Z" stroke="#fff" stroke-width="1.2" fill="none"/><path d="M13 5.5 C14.5 7 14.5 10 13 11.5 M15.5 3.5 C18 6 18 11 15.5 13.5 M18 1.5 C21.5 5 21.5 12 18 15.5" stroke="#fff" stroke-width="1.2" fill="none"/></svg>
<div class="a ui" style="left:1731.5px;top:1046px;font-size:15.2px;line-height:20px;color:#fff;white-space:pre">РУС</div>
<div class="a ui" style="left:1790px;top:1035px;width:42px;text-align:center;font-size:14.3px;line-height:18px;color:#fff;white-space:pre">13:40</div>
<div class="a ui" style="left:1776px;top:1058px;font-size:14px;line-height:18px;color:#fff;white-space:pre">04.02.2022</div>
<svg class="a" style="left:1868px;top:1045px" width="21" height="21" viewBox="0 0 21 21"><path d="M1 1 H20 V15 H12.5 L10.5 18 L8.5 15 H1 Z" stroke="#fff" stroke-width="1.2" fill="none"/></svg>
<div class="a" style="left:1914px;top:1030px;width:1px;height:50px;background:#8a908c"></div>
</div>
</div>
</body></html>
